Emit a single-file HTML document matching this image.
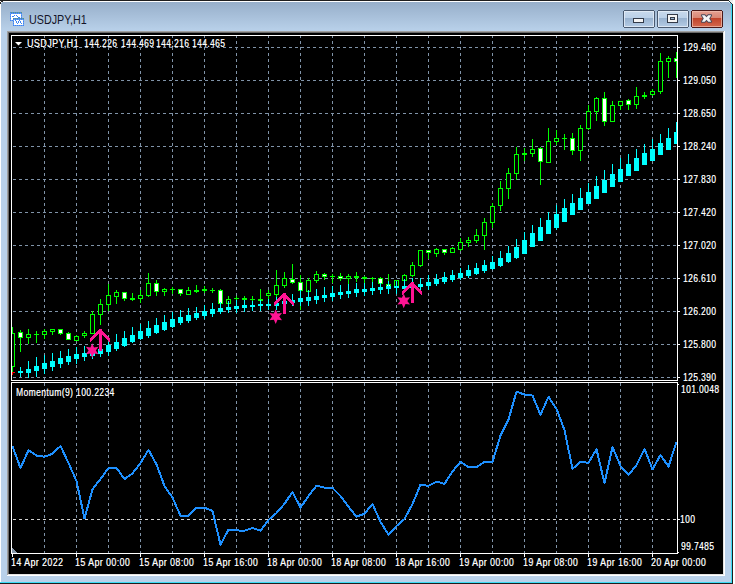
<!DOCTYPE html>
<html><head><meta charset="utf-8"><style>
html,body{margin:0;padding:0;background:#fff;width:735px;height:584px;overflow:hidden}
#win{position:absolute;left:0;top:0;width:735px;height:584px}
.t{position:absolute;font-family:"Liberation Sans",sans-serif;font-size:10px;line-height:10px;color:#fff;white-space:nowrap;transform-origin:0 0;text-shadow:0.4px 0 0 rgba(255,255,255,0.6)}
.tt{position:absolute;font-family:"Liberation Sans",sans-serif;font-size:12px;line-height:14px;color:#141428;white-space:nowrap;transform-origin:0 0;transform:scaleX(0.895)}
</style></head><body>
<div id="win">
<svg width="735" height="584" style="position:absolute;left:0;top:0" shape-rendering="crispEdges">
<defs>
<linearGradient id="tg" x1="0" y1="0" x2="0" y2="1"><stop offset="0" stop-color="#97afca"/><stop offset="1" stop-color="#b9d1ea"/></linearGradient>
<linearGradient id="bu" x1="0" y1="0" x2="0" y2="1"><stop offset="0" stop-color="#c9daec"/><stop offset="0.45" stop-color="#bad0e8"/><stop offset="0.46" stop-color="#98b2cf"/><stop offset="1" stop-color="#b6cde6"/></linearGradient>
<linearGradient id="bc" x1="0" y1="0" x2="0" y2="1"><stop offset="0" stop-color="#e6a294"/><stop offset="0.45" stop-color="#d88572"/><stop offset="0.46" stop-color="#c0432a"/><stop offset="1" stop-color="#d56a50"/></linearGradient>
<clipPath id="mainclip"><rect x="12" y="36" width="665" height="344"/></clipPath><clipPath id="indclip"><rect x="12" y="383" width="665" height="170"/></clipPath>
</defs>
<rect x="0" y="0" width="733" height="584" fill="#b9d1ea"/>
<rect x="0" y="2" width="733" height="29" fill="url(#tg)"/>
<rect x="0" y="0" width="729" height="1" fill="#1e1e1e"/>
<rect x="729" y="0" width="6" height="1" fill="#e8e8e8"/>
<rect x="0" y="1" width="729" height="1" fill="#ffffff"/>
<rect x="1" y="1" width="2" height="1" fill="#2a2a2a"/>
<rect x="0" y="2" width="1" height="2" fill="#2a2a2a"/>
<rect x="1" y="2" width="1" height="1" fill="#f0f4f8"/>
<rect x="0" y="4" width="1" height="580" fill="#ffffff"/>
<rect x="729" y="1" width="1" height="1" fill="#203a40"/>
<rect x="730" y="1" width="3" height="1" fill="#f0f0f0"/>
<rect x="729" y="2" width="1" height="1" fill="#c8eef8"/>
<rect x="730" y="2" width="1" height="1" fill="#203a40"/>
<rect x="731" y="2" width="2" height="2" fill="#f0f0f0"/>
<rect x="731" y="3" width="1" height="1" fill="#204048"/>
<rect x="731" y="4" width="1" height="579" fill="#3cdcf6"/>
<rect x="732" y="4" width="1" height="580" fill="#1e1e1e"/>
<rect x="0" y="582" width="732" height="1" fill="#3cdcf6"/>
<rect x="0" y="583" width="733" height="1" fill="#1e1e1e"/>
<rect x="733" y="0" width="2" height="584" fill="#fff"/>
<!-- client edge -->
<rect x="7" y="31" width="718" height="545" fill="#ffffff"/>
<rect x="7" y="31" width="717" height="544" fill="#a0a0a0"/>
<rect x="8" y="32" width="716" height="543" fill="#e3e3e3"/>
<rect x="8" y="32" width="715" height="542" fill="#696969"/>
<rect x="9" y="33" width="714" height="541" fill="#000"/>
<!-- buttons -->
<rect x="623.5" y="10.5" width="31" height="17" rx="2" fill="url(#bu)" stroke="#4a5a70"/>
<rect x="624.5" y="11.5" width="29" height="15" rx="1" fill="none" stroke="#e6eef8" stroke-opacity="0.8"/>
<rect x="657.5" y="10.5" width="31" height="17" rx="2" fill="url(#bu)" stroke="#4a5a70"/>
<rect x="658.5" y="11.5" width="29" height="15" rx="1" fill="none" stroke="#e6eef8" stroke-opacity="0.8"/>
<rect x="691.5" y="10.5" width="31" height="17" rx="2" fill="url(#bc)" stroke="#4a1818"/>
<rect x="692.5" y="11.5" width="29" height="15" rx="1" fill="none" stroke="#f0c0b0" stroke-opacity="0.7"/>
<rect x="633.5" y="18.5" width="10" height="4" rx="1" fill="#f4f4f4" stroke="#333a48"/>
<rect x="667.5" y="14.5" width="10" height="8" rx="1" fill="#f4f4f4" stroke="#333a48"/>
<rect x="670.5" y="17.5" width="4" height="2" fill="#9ab4d0" stroke="#333a48"/>
<path d="M701.8 15.2 L704.7 15.2 L706.5 17.2 L708.3 15.2 L711.2 15.2 L709.2 18.5 L711.2 21.8 L708.3 21.8 L706.5 19.8 L704.7 21.8 L701.8 21.8 L703.8 18.5 Z" fill="#f6f6f6" stroke="#4a4a5a" stroke-width="1.8" paint-order="stroke" stroke-linejoin="round" shape-rendering="geometricPrecision"/>
<g id="icon"><rect x="10" y="12" width="12" height="9" fill="#ffffff"/><rect x="10" y="12" width="1" height="1" fill="#3d84f4"/><rect x="10" y="13" width="1" height="1" fill="#6aa0f0"/><rect x="10" y="14" width="1" height="1" fill="#3d84f4"/><rect x="10" y="15" width="1" height="1" fill="#6aa0f0"/><rect x="10" y="16" width="1" height="1" fill="#3d84f4"/><rect x="10" y="17" width="1" height="1" fill="#6aa0f0"/><rect x="10" y="18" width="1" height="1" fill="#3d84f4"/><rect x="10" y="19" width="1" height="1" fill="#6aa0f0"/><rect x="10" y="20" width="1" height="1" fill="#3d84f4"/><rect x="11" y="12" width="1" height="1" fill="#5f9a7a"/><rect x="11" y="13" width="1" height="1" fill="#3d84f4"/><rect x="11" y="20" width="1" height="1" fill="#6aa0f0"/><rect x="12" y="12" width="1" height="1" fill="#3d84f4"/><rect x="12" y="13" width="1" height="1" fill="#6aa0f0"/><rect x="12" y="20" width="1" height="1" fill="#3d84f4"/><rect x="13" y="12" width="1" height="1" fill="#5f9a7a"/><rect x="13" y="13" width="1" height="1" fill="#3d84f4"/><rect x="13" y="20" width="1" height="1" fill="#6aa0f0"/><rect x="14" y="12" width="1" height="1" fill="#3d84f4"/><rect x="14" y="13" width="1" height="1" fill="#6aa0f0"/><rect x="14" y="20" width="1" height="1" fill="#3d84f4"/><rect x="15" y="12" width="1" height="1" fill="#5f9a7a"/><rect x="15" y="13" width="1" height="1" fill="#3d84f4"/><rect x="15" y="20" width="1" height="1" fill="#6aa0f0"/><rect x="16" y="12" width="1" height="1" fill="#3d84f4"/><rect x="16" y="13" width="1" height="1" fill="#6aa0f0"/><rect x="16" y="20" width="1" height="1" fill="#3d84f4"/><rect x="17" y="12" width="1" height="1" fill="#5f9a7a"/><rect x="17" y="13" width="1" height="1" fill="#3d84f4"/><rect x="17" y="20" width="1" height="1" fill="#6aa0f0"/><rect x="18" y="12" width="1" height="1" fill="#3d84f4"/><rect x="18" y="13" width="1" height="1" fill="#6aa0f0"/><rect x="18" y="20" width="1" height="1" fill="#3d84f4"/><rect x="19" y="12" width="1" height="1" fill="#5f9a7a"/><rect x="19" y="13" width="1" height="1" fill="#3d84f4"/><rect x="19" y="20" width="1" height="1" fill="#6aa0f0"/><rect x="20" y="12" width="1" height="1" fill="#3d84f4"/><rect x="20" y="13" width="1" height="1" fill="#6aa0f0"/><rect x="20" y="20" width="1" height="1" fill="#3d84f4"/><rect x="21" y="12" width="1" height="1" fill="#5f9a7a"/><rect x="21" y="13" width="1" height="1" fill="#3d84f4"/><rect x="21" y="14" width="1" height="1" fill="#6aa0f0"/><rect x="21" y="15" width="1" height="1" fill="#3d84f4"/><rect x="21" y="16" width="1" height="1" fill="#6aa0f0"/><rect x="21" y="17" width="1" height="1" fill="#3d84f4"/><rect x="21" y="18" width="1" height="1" fill="#6aa0f0"/><rect x="21" y="19" width="1" height="1" fill="#3d84f4"/><rect x="21" y="20" width="1" height="1" fill="#6aa0f0"/><rect x="12" y="16" width="1" height="1" fill="#3d84f4"/><rect x="13" y="16" width="1" height="1" fill="#3d84f4"/><rect x="14" y="15" width="1" height="1" fill="#3d84f4"/><rect x="16" y="15" width="1" height="1" fill="#3d84f4"/><rect x="17" y="16" width="1" height="1" fill="#3d84f4"/><rect x="18" y="17" width="1" height="1" fill="#3d84f4"/><rect x="19" y="17" width="1" height="1" fill="#3d84f4"/><rect x="13" y="18" width="11" height="8" fill="#ffffff"/><rect x="13" y="18" width="1" height="1" fill="#5f9a7a"/><rect x="13" y="19" width="1" height="1" fill="#3d84f4"/><rect x="13" y="20" width="1" height="1" fill="#6aa0f0"/><rect x="13" y="21" width="1" height="1" fill="#3d84f4"/><rect x="13" y="22" width="1" height="1" fill="#6aa0f0"/><rect x="13" y="23" width="1" height="1" fill="#3d84f4"/><rect x="13" y="24" width="1" height="1" fill="#6aa0f0"/><rect x="13" y="25" width="1" height="1" fill="#3d84f4"/><rect x="14" y="18" width="1" height="1" fill="#3d84f4"/><rect x="14" y="19" width="1" height="1" fill="#6aa0f0"/><rect x="14" y="25" width="1" height="1" fill="#6aa0f0"/><rect x="15" y="18" width="1" height="1" fill="#5f9a7a"/><rect x="15" y="19" width="1" height="1" fill="#3d84f4"/><rect x="15" y="25" width="1" height="1" fill="#3d84f4"/><rect x="16" y="18" width="1" height="1" fill="#3d84f4"/><rect x="16" y="19" width="1" height="1" fill="#6aa0f0"/><rect x="16" y="25" width="1" height="1" fill="#6aa0f0"/><rect x="17" y="18" width="1" height="1" fill="#5f9a7a"/><rect x="17" y="19" width="1" height="1" fill="#3d84f4"/><rect x="17" y="25" width="1" height="1" fill="#3d84f4"/><rect x="18" y="18" width="1" height="1" fill="#3d84f4"/><rect x="18" y="19" width="1" height="1" fill="#6aa0f0"/><rect x="18" y="25" width="1" height="1" fill="#6aa0f0"/><rect x="19" y="18" width="1" height="1" fill="#5f9a7a"/><rect x="19" y="19" width="1" height="1" fill="#3d84f4"/><rect x="19" y="25" width="1" height="1" fill="#3d84f4"/><rect x="20" y="18" width="1" height="1" fill="#3d84f4"/><rect x="20" y="19" width="1" height="1" fill="#6aa0f0"/><rect x="20" y="25" width="1" height="1" fill="#6aa0f0"/><rect x="21" y="18" width="1" height="1" fill="#5f9a7a"/><rect x="21" y="19" width="1" height="1" fill="#3d84f4"/><rect x="21" y="25" width="1" height="1" fill="#3d84f4"/><rect x="22" y="18" width="1" height="1" fill="#3d84f4"/><rect x="22" y="19" width="1" height="1" fill="#6aa0f0"/><rect x="22" y="25" width="1" height="1" fill="#6aa0f0"/><rect x="23" y="18" width="1" height="1" fill="#5f9a7a"/><rect x="23" y="19" width="1" height="1" fill="#3d84f4"/><rect x="23" y="20" width="1" height="1" fill="#6aa0f0"/><rect x="23" y="21" width="1" height="1" fill="#3d84f4"/><rect x="23" y="22" width="1" height="1" fill="#6aa0f0"/><rect x="23" y="23" width="1" height="1" fill="#3d84f4"/><rect x="23" y="24" width="1" height="1" fill="#6aa0f0"/><rect x="23" y="25" width="1" height="1" fill="#3d84f4"/><rect x="15" y="20" width="1" height="1" fill="#3d84f4"/><rect x="16" y="21" width="1" height="1" fill="#3d84f4"/><rect x="16" y="22" width="1" height="1" fill="#3d84f4"/><rect x="17" y="23" width="1" height="1" fill="#3d84f4"/><rect x="18" y="22" width="1" height="1" fill="#3d84f4"/><rect x="18" y="21" width="1" height="1" fill="#3d84f4"/><rect x="19" y="20" width="1" height="1" fill="#3d84f4"/><rect x="20" y="21" width="1" height="1" fill="#3d84f4"/><rect x="20" y="22" width="1" height="1" fill="#3d84f4"/><rect x="21" y="23" width="1" height="1" fill="#3d84f4"/></g>
<path d="M13 47.5h3 M19 47.5h3 M25 47.5h3 M31 47.5h3 M37 47.5h3 M43 47.5h3 M49 47.5h3 M55 47.5h3 M61 47.5h3 M67 47.5h3 M73 47.5h3 M79 47.5h3 M85 47.5h3 M91 47.5h3 M97 47.5h3 M103 47.5h3 M109 47.5h3 M115 47.5h3 M121 47.5h3 M127 47.5h3 M133 47.5h3 M139 47.5h3 M145 47.5h3 M151 47.5h3 M157 47.5h3 M163 47.5h3 M169 47.5h3 M175 47.5h3 M181 47.5h3 M187 47.5h3 M193 47.5h3 M199 47.5h3 M205 47.5h3 M211 47.5h3 M217 47.5h3 M223 47.5h3 M229 47.5h3 M235 47.5h3 M241 47.5h3 M247 47.5h3 M253 47.5h3 M259 47.5h3 M265 47.5h3 M271 47.5h3 M277 47.5h3 M283 47.5h3 M289 47.5h3 M295 47.5h3 M301 47.5h3 M307 47.5h3 M313 47.5h3 M319 47.5h3 M325 47.5h3 M331 47.5h3 M337 47.5h3 M343 47.5h3 M349 47.5h3 M355 47.5h3 M361 47.5h3 M367 47.5h3 M373 47.5h3 M379 47.5h3 M385 47.5h3 M391 47.5h3 M397 47.5h3 M403 47.5h3 M409 47.5h3 M415 47.5h3 M421 47.5h3 M427 47.5h3 M433 47.5h3 M439 47.5h3 M445 47.5h3 M451 47.5h3 M457 47.5h3 M463 47.5h3 M469 47.5h3 M475 47.5h3 M481 47.5h3 M487 47.5h3 M493 47.5h3 M499 47.5h3 M505 47.5h3 M511 47.5h3 M517 47.5h3 M523 47.5h3 M529 47.5h3 M535 47.5h3 M541 47.5h3 M547 47.5h3 M553 47.5h3 M559 47.5h3 M565 47.5h3 M571 47.5h3 M577 47.5h3 M583 47.5h3 M589 47.5h3 M595 47.5h3 M601 47.5h3 M607 47.5h3 M613 47.5h3 M619 47.5h3 M625 47.5h3 M631 47.5h3 M637 47.5h3 M643 47.5h3 M649 47.5h3 M655 47.5h3 M661 47.5h3 M667 47.5h3 M673 47.5h3 M13 80.5h3 M19 80.5h3 M25 80.5h3 M31 80.5h3 M37 80.5h3 M43 80.5h3 M49 80.5h3 M55 80.5h3 M61 80.5h3 M67 80.5h3 M73 80.5h3 M79 80.5h3 M85 80.5h3 M91 80.5h3 M97 80.5h3 M103 80.5h3 M109 80.5h3 M115 80.5h3 M121 80.5h3 M127 80.5h3 M133 80.5h3 M139 80.5h3 M145 80.5h3 M151 80.5h3 M157 80.5h3 M163 80.5h3 M169 80.5h3 M175 80.5h3 M181 80.5h3 M187 80.5h3 M193 80.5h3 M199 80.5h3 M205 80.5h3 M211 80.5h3 M217 80.5h3 M223 80.5h3 M229 80.5h3 M235 80.5h3 M241 80.5h3 M247 80.5h3 M253 80.5h3 M259 80.5h3 M265 80.5h3 M271 80.5h3 M277 80.5h3 M283 80.5h3 M289 80.5h3 M295 80.5h3 M301 80.5h3 M307 80.5h3 M313 80.5h3 M319 80.5h3 M325 80.5h3 M331 80.5h3 M337 80.5h3 M343 80.5h3 M349 80.5h3 M355 80.5h3 M361 80.5h3 M367 80.5h3 M373 80.5h3 M379 80.5h3 M385 80.5h3 M391 80.5h3 M397 80.5h3 M403 80.5h3 M409 80.5h3 M415 80.5h3 M421 80.5h3 M427 80.5h3 M433 80.5h3 M439 80.5h3 M445 80.5h3 M451 80.5h3 M457 80.5h3 M463 80.5h3 M469 80.5h3 M475 80.5h3 M481 80.5h3 M487 80.5h3 M493 80.5h3 M499 80.5h3 M505 80.5h3 M511 80.5h3 M517 80.5h3 M523 80.5h3 M529 80.5h3 M535 80.5h3 M541 80.5h3 M547 80.5h3 M553 80.5h3 M559 80.5h3 M565 80.5h3 M571 80.5h3 M577 80.5h3 M583 80.5h3 M589 80.5h3 M595 80.5h3 M601 80.5h3 M607 80.5h3 M613 80.5h3 M619 80.5h3 M625 80.5h3 M631 80.5h3 M637 80.5h3 M643 80.5h3 M649 80.5h3 M655 80.5h3 M661 80.5h3 M667 80.5h3 M673 80.5h3 M13 113.5h3 M19 113.5h3 M25 113.5h3 M31 113.5h3 M37 113.5h3 M43 113.5h3 M49 113.5h3 M55 113.5h3 M61 113.5h3 M67 113.5h3 M73 113.5h3 M79 113.5h3 M85 113.5h3 M91 113.5h3 M97 113.5h3 M103 113.5h3 M109 113.5h3 M115 113.5h3 M121 113.5h3 M127 113.5h3 M133 113.5h3 M139 113.5h3 M145 113.5h3 M151 113.5h3 M157 113.5h3 M163 113.5h3 M169 113.5h3 M175 113.5h3 M181 113.5h3 M187 113.5h3 M193 113.5h3 M199 113.5h3 M205 113.5h3 M211 113.5h3 M217 113.5h3 M223 113.5h3 M229 113.5h3 M235 113.5h3 M241 113.5h3 M247 113.5h3 M253 113.5h3 M259 113.5h3 M265 113.5h3 M271 113.5h3 M277 113.5h3 M283 113.5h3 M289 113.5h3 M295 113.5h3 M301 113.5h3 M307 113.5h3 M313 113.5h3 M319 113.5h3 M325 113.5h3 M331 113.5h3 M337 113.5h3 M343 113.5h3 M349 113.5h3 M355 113.5h3 M361 113.5h3 M367 113.5h3 M373 113.5h3 M379 113.5h3 M385 113.5h3 M391 113.5h3 M397 113.5h3 M403 113.5h3 M409 113.5h3 M415 113.5h3 M421 113.5h3 M427 113.5h3 M433 113.5h3 M439 113.5h3 M445 113.5h3 M451 113.5h3 M457 113.5h3 M463 113.5h3 M469 113.5h3 M475 113.5h3 M481 113.5h3 M487 113.5h3 M493 113.5h3 M499 113.5h3 M505 113.5h3 M511 113.5h3 M517 113.5h3 M523 113.5h3 M529 113.5h3 M535 113.5h3 M541 113.5h3 M547 113.5h3 M553 113.5h3 M559 113.5h3 M565 113.5h3 M571 113.5h3 M577 113.5h3 M583 113.5h3 M589 113.5h3 M595 113.5h3 M601 113.5h3 M607 113.5h3 M613 113.5h3 M619 113.5h3 M625 113.5h3 M631 113.5h3 M637 113.5h3 M643 113.5h3 M649 113.5h3 M655 113.5h3 M661 113.5h3 M667 113.5h3 M673 113.5h3 M13 146.5h3 M19 146.5h3 M25 146.5h3 M31 146.5h3 M37 146.5h3 M43 146.5h3 M49 146.5h3 M55 146.5h3 M61 146.5h3 M67 146.5h3 M73 146.5h3 M79 146.5h3 M85 146.5h3 M91 146.5h3 M97 146.5h3 M103 146.5h3 M109 146.5h3 M115 146.5h3 M121 146.5h3 M127 146.5h3 M133 146.5h3 M139 146.5h3 M145 146.5h3 M151 146.5h3 M157 146.5h3 M163 146.5h3 M169 146.5h3 M175 146.5h3 M181 146.5h3 M187 146.5h3 M193 146.5h3 M199 146.5h3 M205 146.5h3 M211 146.5h3 M217 146.5h3 M223 146.5h3 M229 146.5h3 M235 146.5h3 M241 146.5h3 M247 146.5h3 M253 146.5h3 M259 146.5h3 M265 146.5h3 M271 146.5h3 M277 146.5h3 M283 146.5h3 M289 146.5h3 M295 146.5h3 M301 146.5h3 M307 146.5h3 M313 146.5h3 M319 146.5h3 M325 146.5h3 M331 146.5h3 M337 146.5h3 M343 146.5h3 M349 146.5h3 M355 146.5h3 M361 146.5h3 M367 146.5h3 M373 146.5h3 M379 146.5h3 M385 146.5h3 M391 146.5h3 M397 146.5h3 M403 146.5h3 M409 146.5h3 M415 146.5h3 M421 146.5h3 M427 146.5h3 M433 146.5h3 M439 146.5h3 M445 146.5h3 M451 146.5h3 M457 146.5h3 M463 146.5h3 M469 146.5h3 M475 146.5h3 M481 146.5h3 M487 146.5h3 M493 146.5h3 M499 146.5h3 M505 146.5h3 M511 146.5h3 M517 146.5h3 M523 146.5h3 M529 146.5h3 M535 146.5h3 M541 146.5h3 M547 146.5h3 M553 146.5h3 M559 146.5h3 M565 146.5h3 M571 146.5h3 M577 146.5h3 M583 146.5h3 M589 146.5h3 M595 146.5h3 M601 146.5h3 M607 146.5h3 M613 146.5h3 M619 146.5h3 M625 146.5h3 M631 146.5h3 M637 146.5h3 M643 146.5h3 M649 146.5h3 M655 146.5h3 M661 146.5h3 M667 146.5h3 M673 146.5h3 M13 179.5h3 M19 179.5h3 M25 179.5h3 M31 179.5h3 M37 179.5h3 M43 179.5h3 M49 179.5h3 M55 179.5h3 M61 179.5h3 M67 179.5h3 M73 179.5h3 M79 179.5h3 M85 179.5h3 M91 179.5h3 M97 179.5h3 M103 179.5h3 M109 179.5h3 M115 179.5h3 M121 179.5h3 M127 179.5h3 M133 179.5h3 M139 179.5h3 M145 179.5h3 M151 179.5h3 M157 179.5h3 M163 179.5h3 M169 179.5h3 M175 179.5h3 M181 179.5h3 M187 179.5h3 M193 179.5h3 M199 179.5h3 M205 179.5h3 M211 179.5h3 M217 179.5h3 M223 179.5h3 M229 179.5h3 M235 179.5h3 M241 179.5h3 M247 179.5h3 M253 179.5h3 M259 179.5h3 M265 179.5h3 M271 179.5h3 M277 179.5h3 M283 179.5h3 M289 179.5h3 M295 179.5h3 M301 179.5h3 M307 179.5h3 M313 179.5h3 M319 179.5h3 M325 179.5h3 M331 179.5h3 M337 179.5h3 M343 179.5h3 M349 179.5h3 M355 179.5h3 M361 179.5h3 M367 179.5h3 M373 179.5h3 M379 179.5h3 M385 179.5h3 M391 179.5h3 M397 179.5h3 M403 179.5h3 M409 179.5h3 M415 179.5h3 M421 179.5h3 M427 179.5h3 M433 179.5h3 M439 179.5h3 M445 179.5h3 M451 179.5h3 M457 179.5h3 M463 179.5h3 M469 179.5h3 M475 179.5h3 M481 179.5h3 M487 179.5h3 M493 179.5h3 M499 179.5h3 M505 179.5h3 M511 179.5h3 M517 179.5h3 M523 179.5h3 M529 179.5h3 M535 179.5h3 M541 179.5h3 M547 179.5h3 M553 179.5h3 M559 179.5h3 M565 179.5h3 M571 179.5h3 M577 179.5h3 M583 179.5h3 M589 179.5h3 M595 179.5h3 M601 179.5h3 M607 179.5h3 M613 179.5h3 M619 179.5h3 M625 179.5h3 M631 179.5h3 M637 179.5h3 M643 179.5h3 M649 179.5h3 M655 179.5h3 M661 179.5h3 M667 179.5h3 M673 179.5h3 M13 212.5h3 M19 212.5h3 M25 212.5h3 M31 212.5h3 M37 212.5h3 M43 212.5h3 M49 212.5h3 M55 212.5h3 M61 212.5h3 M67 212.5h3 M73 212.5h3 M79 212.5h3 M85 212.5h3 M91 212.5h3 M97 212.5h3 M103 212.5h3 M109 212.5h3 M115 212.5h3 M121 212.5h3 M127 212.5h3 M133 212.5h3 M139 212.5h3 M145 212.5h3 M151 212.5h3 M157 212.5h3 M163 212.5h3 M169 212.5h3 M175 212.5h3 M181 212.5h3 M187 212.5h3 M193 212.5h3 M199 212.5h3 M205 212.5h3 M211 212.5h3 M217 212.5h3 M223 212.5h3 M229 212.5h3 M235 212.5h3 M241 212.5h3 M247 212.5h3 M253 212.5h3 M259 212.5h3 M265 212.5h3 M271 212.5h3 M277 212.5h3 M283 212.5h3 M289 212.5h3 M295 212.5h3 M301 212.5h3 M307 212.5h3 M313 212.5h3 M319 212.5h3 M325 212.5h3 M331 212.5h3 M337 212.5h3 M343 212.5h3 M349 212.5h3 M355 212.5h3 M361 212.5h3 M367 212.5h3 M373 212.5h3 M379 212.5h3 M385 212.5h3 M391 212.5h3 M397 212.5h3 M403 212.5h3 M409 212.5h3 M415 212.5h3 M421 212.5h3 M427 212.5h3 M433 212.5h3 M439 212.5h3 M445 212.5h3 M451 212.5h3 M457 212.5h3 M463 212.5h3 M469 212.5h3 M475 212.5h3 M481 212.5h3 M487 212.5h3 M493 212.5h3 M499 212.5h3 M505 212.5h3 M511 212.5h3 M517 212.5h3 M523 212.5h3 M529 212.5h3 M535 212.5h3 M541 212.5h3 M547 212.5h3 M553 212.5h3 M559 212.5h3 M565 212.5h3 M571 212.5h3 M577 212.5h3 M583 212.5h3 M589 212.5h3 M595 212.5h3 M601 212.5h3 M607 212.5h3 M613 212.5h3 M619 212.5h3 M625 212.5h3 M631 212.5h3 M637 212.5h3 M643 212.5h3 M649 212.5h3 M655 212.5h3 M661 212.5h3 M667 212.5h3 M673 212.5h3 M13 245.5h3 M19 245.5h3 M25 245.5h3 M31 245.5h3 M37 245.5h3 M43 245.5h3 M49 245.5h3 M55 245.5h3 M61 245.5h3 M67 245.5h3 M73 245.5h3 M79 245.5h3 M85 245.5h3 M91 245.5h3 M97 245.5h3 M103 245.5h3 M109 245.5h3 M115 245.5h3 M121 245.5h3 M127 245.5h3 M133 245.5h3 M139 245.5h3 M145 245.5h3 M151 245.5h3 M157 245.5h3 M163 245.5h3 M169 245.5h3 M175 245.5h3 M181 245.5h3 M187 245.5h3 M193 245.5h3 M199 245.5h3 M205 245.5h3 M211 245.5h3 M217 245.5h3 M223 245.5h3 M229 245.5h3 M235 245.5h3 M241 245.5h3 M247 245.5h3 M253 245.5h3 M259 245.5h3 M265 245.5h3 M271 245.5h3 M277 245.5h3 M283 245.5h3 M289 245.5h3 M295 245.5h3 M301 245.5h3 M307 245.5h3 M313 245.5h3 M319 245.5h3 M325 245.5h3 M331 245.5h3 M337 245.5h3 M343 245.5h3 M349 245.5h3 M355 245.5h3 M361 245.5h3 M367 245.5h3 M373 245.5h3 M379 245.5h3 M385 245.5h3 M391 245.5h3 M397 245.5h3 M403 245.5h3 M409 245.5h3 M415 245.5h3 M421 245.5h3 M427 245.5h3 M433 245.5h3 M439 245.5h3 M445 245.5h3 M451 245.5h3 M457 245.5h3 M463 245.5h3 M469 245.5h3 M475 245.5h3 M481 245.5h3 M487 245.5h3 M493 245.5h3 M499 245.5h3 M505 245.5h3 M511 245.5h3 M517 245.5h3 M523 245.5h3 M529 245.5h3 M535 245.5h3 M541 245.5h3 M547 245.5h3 M553 245.5h3 M559 245.5h3 M565 245.5h3 M571 245.5h3 M577 245.5h3 M583 245.5h3 M589 245.5h3 M595 245.5h3 M601 245.5h3 M607 245.5h3 M613 245.5h3 M619 245.5h3 M625 245.5h3 M631 245.5h3 M637 245.5h3 M643 245.5h3 M649 245.5h3 M655 245.5h3 M661 245.5h3 M667 245.5h3 M673 245.5h3 M13 278.5h3 M19 278.5h3 M25 278.5h3 M31 278.5h3 M37 278.5h3 M43 278.5h3 M49 278.5h3 M55 278.5h3 M61 278.5h3 M67 278.5h3 M73 278.5h3 M79 278.5h3 M85 278.5h3 M91 278.5h3 M97 278.5h3 M103 278.5h3 M109 278.5h3 M115 278.5h3 M121 278.5h3 M127 278.5h3 M133 278.5h3 M139 278.5h3 M145 278.5h3 M151 278.5h3 M157 278.5h3 M163 278.5h3 M169 278.5h3 M175 278.5h3 M181 278.5h3 M187 278.5h3 M193 278.5h3 M199 278.5h3 M205 278.5h3 M211 278.5h3 M217 278.5h3 M223 278.5h3 M229 278.5h3 M235 278.5h3 M241 278.5h3 M247 278.5h3 M253 278.5h3 M259 278.5h3 M265 278.5h3 M271 278.5h3 M277 278.5h3 M283 278.5h3 M289 278.5h3 M295 278.5h3 M301 278.5h3 M307 278.5h3 M313 278.5h3 M319 278.5h3 M325 278.5h3 M331 278.5h3 M337 278.5h3 M343 278.5h3 M349 278.5h3 M355 278.5h3 M361 278.5h3 M367 278.5h3 M373 278.5h3 M379 278.5h3 M385 278.5h3 M391 278.5h3 M397 278.5h3 M403 278.5h3 M409 278.5h3 M415 278.5h3 M421 278.5h3 M427 278.5h3 M433 278.5h3 M439 278.5h3 M445 278.5h3 M451 278.5h3 M457 278.5h3 M463 278.5h3 M469 278.5h3 M475 278.5h3 M481 278.5h3 M487 278.5h3 M493 278.5h3 M499 278.5h3 M505 278.5h3 M511 278.5h3 M517 278.5h3 M523 278.5h3 M529 278.5h3 M535 278.5h3 M541 278.5h3 M547 278.5h3 M553 278.5h3 M559 278.5h3 M565 278.5h3 M571 278.5h3 M577 278.5h3 M583 278.5h3 M589 278.5h3 M595 278.5h3 M601 278.5h3 M607 278.5h3 M613 278.5h3 M619 278.5h3 M625 278.5h3 M631 278.5h3 M637 278.5h3 M643 278.5h3 M649 278.5h3 M655 278.5h3 M661 278.5h3 M667 278.5h3 M673 278.5h3 M13 311.5h3 M19 311.5h3 M25 311.5h3 M31 311.5h3 M37 311.5h3 M43 311.5h3 M49 311.5h3 M55 311.5h3 M61 311.5h3 M67 311.5h3 M73 311.5h3 M79 311.5h3 M85 311.5h3 M91 311.5h3 M97 311.5h3 M103 311.5h3 M109 311.5h3 M115 311.5h3 M121 311.5h3 M127 311.5h3 M133 311.5h3 M139 311.5h3 M145 311.5h3 M151 311.5h3 M157 311.5h3 M163 311.5h3 M169 311.5h3 M175 311.5h3 M181 311.5h3 M187 311.5h3 M193 311.5h3 M199 311.5h3 M205 311.5h3 M211 311.5h3 M217 311.5h3 M223 311.5h3 M229 311.5h3 M235 311.5h3 M241 311.5h3 M247 311.5h3 M253 311.5h3 M259 311.5h3 M265 311.5h3 M271 311.5h3 M277 311.5h3 M283 311.5h3 M289 311.5h3 M295 311.5h3 M301 311.5h3 M307 311.5h3 M313 311.5h3 M319 311.5h3 M325 311.5h3 M331 311.5h3 M337 311.5h3 M343 311.5h3 M349 311.5h3 M355 311.5h3 M361 311.5h3 M367 311.5h3 M373 311.5h3 M379 311.5h3 M385 311.5h3 M391 311.5h3 M397 311.5h3 M403 311.5h3 M409 311.5h3 M415 311.5h3 M421 311.5h3 M427 311.5h3 M433 311.5h3 M439 311.5h3 M445 311.5h3 M451 311.5h3 M457 311.5h3 M463 311.5h3 M469 311.5h3 M475 311.5h3 M481 311.5h3 M487 311.5h3 M493 311.5h3 M499 311.5h3 M505 311.5h3 M511 311.5h3 M517 311.5h3 M523 311.5h3 M529 311.5h3 M535 311.5h3 M541 311.5h3 M547 311.5h3 M553 311.5h3 M559 311.5h3 M565 311.5h3 M571 311.5h3 M577 311.5h3 M583 311.5h3 M589 311.5h3 M595 311.5h3 M601 311.5h3 M607 311.5h3 M613 311.5h3 M619 311.5h3 M625 311.5h3 M631 311.5h3 M637 311.5h3 M643 311.5h3 M649 311.5h3 M655 311.5h3 M661 311.5h3 M667 311.5h3 M673 311.5h3 M13 344.5h3 M19 344.5h3 M25 344.5h3 M31 344.5h3 M37 344.5h3 M43 344.5h3 M49 344.5h3 M55 344.5h3 M61 344.5h3 M67 344.5h3 M73 344.5h3 M79 344.5h3 M85 344.5h3 M91 344.5h3 M97 344.5h3 M103 344.5h3 M109 344.5h3 M115 344.5h3 M121 344.5h3 M127 344.5h3 M133 344.5h3 M139 344.5h3 M145 344.5h3 M151 344.5h3 M157 344.5h3 M163 344.5h3 M169 344.5h3 M175 344.5h3 M181 344.5h3 M187 344.5h3 M193 344.5h3 M199 344.5h3 M205 344.5h3 M211 344.5h3 M217 344.5h3 M223 344.5h3 M229 344.5h3 M235 344.5h3 M241 344.5h3 M247 344.5h3 M253 344.5h3 M259 344.5h3 M265 344.5h3 M271 344.5h3 M277 344.5h3 M283 344.5h3 M289 344.5h3 M295 344.5h3 M301 344.5h3 M307 344.5h3 M313 344.5h3 M319 344.5h3 M325 344.5h3 M331 344.5h3 M337 344.5h3 M343 344.5h3 M349 344.5h3 M355 344.5h3 M361 344.5h3 M367 344.5h3 M373 344.5h3 M379 344.5h3 M385 344.5h3 M391 344.5h3 M397 344.5h3 M403 344.5h3 M409 344.5h3 M415 344.5h3 M421 344.5h3 M427 344.5h3 M433 344.5h3 M439 344.5h3 M445 344.5h3 M451 344.5h3 M457 344.5h3 M463 344.5h3 M469 344.5h3 M475 344.5h3 M481 344.5h3 M487 344.5h3 M493 344.5h3 M499 344.5h3 M505 344.5h3 M511 344.5h3 M517 344.5h3 M523 344.5h3 M529 344.5h3 M535 344.5h3 M541 344.5h3 M547 344.5h3 M553 344.5h3 M559 344.5h3 M565 344.5h3 M571 344.5h3 M577 344.5h3 M583 344.5h3 M589 344.5h3 M595 344.5h3 M601 344.5h3 M607 344.5h3 M613 344.5h3 M619 344.5h3 M625 344.5h3 M631 344.5h3 M637 344.5h3 M643 344.5h3 M649 344.5h3 M655 344.5h3 M661 344.5h3 M667 344.5h3 M673 344.5h3 M13 377.5h3 M19 377.5h3 M25 377.5h3 M31 377.5h3 M37 377.5h3 M43 377.5h3 M49 377.5h3 M55 377.5h3 M61 377.5h3 M67 377.5h3 M73 377.5h3 M79 377.5h3 M85 377.5h3 M91 377.5h3 M97 377.5h3 M103 377.5h3 M109 377.5h3 M115 377.5h3 M121 377.5h3 M127 377.5h3 M133 377.5h3 M139 377.5h3 M145 377.5h3 M151 377.5h3 M157 377.5h3 M163 377.5h3 M169 377.5h3 M175 377.5h3 M181 377.5h3 M187 377.5h3 M193 377.5h3 M199 377.5h3 M205 377.5h3 M211 377.5h3 M217 377.5h3 M223 377.5h3 M229 377.5h3 M235 377.5h3 M241 377.5h3 M247 377.5h3 M253 377.5h3 M259 377.5h3 M265 377.5h3 M271 377.5h3 M277 377.5h3 M283 377.5h3 M289 377.5h3 M295 377.5h3 M301 377.5h3 M307 377.5h3 M313 377.5h3 M319 377.5h3 M325 377.5h3 M331 377.5h3 M337 377.5h3 M343 377.5h3 M349 377.5h3 M355 377.5h3 M361 377.5h3 M367 377.5h3 M373 377.5h3 M379 377.5h3 M385 377.5h3 M391 377.5h3 M397 377.5h3 M403 377.5h3 M409 377.5h3 M415 377.5h3 M421 377.5h3 M427 377.5h3 M433 377.5h3 M439 377.5h3 M445 377.5h3 M451 377.5h3 M457 377.5h3 M463 377.5h3 M469 377.5h3 M475 377.5h3 M481 377.5h3 M487 377.5h3 M493 377.5h3 M499 377.5h3 M505 377.5h3 M511 377.5h3 M517 377.5h3 M523 377.5h3 M529 377.5h3 M535 377.5h3 M541 377.5h3 M547 377.5h3 M553 377.5h3 M559 377.5h3 M565 377.5h3 M571 377.5h3 M577 377.5h3 M583 377.5h3 M589 377.5h3 M595 377.5h3 M601 377.5h3 M607 377.5h3 M613 377.5h3 M619 377.5h3 M625 377.5h3 M631 377.5h3 M637 377.5h3 M643 377.5h3 M649 377.5h3 M655 377.5h3 M661 377.5h3 M667 377.5h3 M673 377.5h3 M44.5 36v2 M44.5 41v3 M44.5 47v3 M44.5 53v3 M44.5 59v3 M44.5 65v3 M44.5 71v3 M44.5 77v3 M44.5 83v3 M44.5 89v3 M44.5 95v3 M44.5 101v3 M44.5 107v3 M44.5 113v3 M44.5 119v3 M44.5 125v3 M44.5 131v3 M44.5 137v3 M44.5 143v3 M44.5 149v3 M44.5 155v3 M44.5 161v3 M44.5 167v3 M44.5 173v3 M44.5 179v3 M44.5 185v3 M44.5 191v3 M44.5 197v3 M44.5 203v3 M44.5 209v3 M44.5 215v3 M44.5 221v3 M44.5 227v3 M44.5 233v3 M44.5 239v3 M44.5 245v3 M44.5 251v3 M44.5 257v3 M44.5 263v3 M44.5 269v3 M44.5 275v3 M44.5 281v3 M44.5 287v3 M44.5 293v3 M44.5 299v3 M44.5 305v3 M44.5 311v3 M44.5 317v3 M44.5 323v3 M44.5 329v3 M44.5 335v3 M44.5 341v3 M44.5 347v3 M44.5 353v3 M44.5 359v3 M44.5 365v3 M44.5 371v3 M44.5 377v3 M44.5 383v3 M44.5 389v3 M44.5 395v3 M44.5 401v3 M44.5 407v3 M44.5 413v3 M44.5 419v3 M44.5 425v3 M44.5 431v3 M44.5 437v3 M44.5 443v3 M44.5 449v3 M44.5 455v3 M44.5 461v3 M44.5 467v3 M44.5 473v3 M44.5 479v3 M44.5 485v3 M44.5 491v3 M44.5 497v3 M44.5 503v3 M44.5 509v3 M44.5 515v3 M44.5 521v3 M44.5 527v3 M44.5 533v3 M44.5 539v3 M44.5 545v3 M44.5 551v2 M76.5 36v2 M76.5 41v3 M76.5 47v3 M76.5 53v3 M76.5 59v3 M76.5 65v3 M76.5 71v3 M76.5 77v3 M76.5 83v3 M76.5 89v3 M76.5 95v3 M76.5 101v3 M76.5 107v3 M76.5 113v3 M76.5 119v3 M76.5 125v3 M76.5 131v3 M76.5 137v3 M76.5 143v3 M76.5 149v3 M76.5 155v3 M76.5 161v3 M76.5 167v3 M76.5 173v3 M76.5 179v3 M76.5 185v3 M76.5 191v3 M76.5 197v3 M76.5 203v3 M76.5 209v3 M76.5 215v3 M76.5 221v3 M76.5 227v3 M76.5 233v3 M76.5 239v3 M76.5 245v3 M76.5 251v3 M76.5 257v3 M76.5 263v3 M76.5 269v3 M76.5 275v3 M76.5 281v3 M76.5 287v3 M76.5 293v3 M76.5 299v3 M76.5 305v3 M76.5 311v3 M76.5 317v3 M76.5 323v3 M76.5 329v3 M76.5 335v3 M76.5 341v3 M76.5 347v3 M76.5 353v3 M76.5 359v3 M76.5 365v3 M76.5 371v3 M76.5 377v3 M76.5 383v3 M76.5 389v3 M76.5 395v3 M76.5 401v3 M76.5 407v3 M76.5 413v3 M76.5 419v3 M76.5 425v3 M76.5 431v3 M76.5 437v3 M76.5 443v3 M76.5 449v3 M76.5 455v3 M76.5 461v3 M76.5 467v3 M76.5 473v3 M76.5 479v3 M76.5 485v3 M76.5 491v3 M76.5 497v3 M76.5 503v3 M76.5 509v3 M76.5 515v3 M76.5 521v3 M76.5 527v3 M76.5 533v3 M76.5 539v3 M76.5 545v3 M76.5 551v2 M108.5 36v2 M108.5 41v3 M108.5 47v3 M108.5 53v3 M108.5 59v3 M108.5 65v3 M108.5 71v3 M108.5 77v3 M108.5 83v3 M108.5 89v3 M108.5 95v3 M108.5 101v3 M108.5 107v3 M108.5 113v3 M108.5 119v3 M108.5 125v3 M108.5 131v3 M108.5 137v3 M108.5 143v3 M108.5 149v3 M108.5 155v3 M108.5 161v3 M108.5 167v3 M108.5 173v3 M108.5 179v3 M108.5 185v3 M108.5 191v3 M108.5 197v3 M108.5 203v3 M108.5 209v3 M108.5 215v3 M108.5 221v3 M108.5 227v3 M108.5 233v3 M108.5 239v3 M108.5 245v3 M108.5 251v3 M108.5 257v3 M108.5 263v3 M108.5 269v3 M108.5 275v3 M108.5 281v3 M108.5 287v3 M108.5 293v3 M108.5 299v3 M108.5 305v3 M108.5 311v3 M108.5 317v3 M108.5 323v3 M108.5 329v3 M108.5 335v3 M108.5 341v3 M108.5 347v3 M108.5 353v3 M108.5 359v3 M108.5 365v3 M108.5 371v3 M108.5 377v3 M108.5 383v3 M108.5 389v3 M108.5 395v3 M108.5 401v3 M108.5 407v3 M108.5 413v3 M108.5 419v3 M108.5 425v3 M108.5 431v3 M108.5 437v3 M108.5 443v3 M108.5 449v3 M108.5 455v3 M108.5 461v3 M108.5 467v3 M108.5 473v3 M108.5 479v3 M108.5 485v3 M108.5 491v3 M108.5 497v3 M108.5 503v3 M108.5 509v3 M108.5 515v3 M108.5 521v3 M108.5 527v3 M108.5 533v3 M108.5 539v3 M108.5 545v3 M108.5 551v2 M140.5 36v2 M140.5 41v3 M140.5 47v3 M140.5 53v3 M140.5 59v3 M140.5 65v3 M140.5 71v3 M140.5 77v3 M140.5 83v3 M140.5 89v3 M140.5 95v3 M140.5 101v3 M140.5 107v3 M140.5 113v3 M140.5 119v3 M140.5 125v3 M140.5 131v3 M140.5 137v3 M140.5 143v3 M140.5 149v3 M140.5 155v3 M140.5 161v3 M140.5 167v3 M140.5 173v3 M140.5 179v3 M140.5 185v3 M140.5 191v3 M140.5 197v3 M140.5 203v3 M140.5 209v3 M140.5 215v3 M140.5 221v3 M140.5 227v3 M140.5 233v3 M140.5 239v3 M140.5 245v3 M140.5 251v3 M140.5 257v3 M140.5 263v3 M140.5 269v3 M140.5 275v3 M140.5 281v3 M140.5 287v3 M140.5 293v3 M140.5 299v3 M140.5 305v3 M140.5 311v3 M140.5 317v3 M140.5 323v3 M140.5 329v3 M140.5 335v3 M140.5 341v3 M140.5 347v3 M140.5 353v3 M140.5 359v3 M140.5 365v3 M140.5 371v3 M140.5 377v3 M140.5 383v3 M140.5 389v3 M140.5 395v3 M140.5 401v3 M140.5 407v3 M140.5 413v3 M140.5 419v3 M140.5 425v3 M140.5 431v3 M140.5 437v3 M140.5 443v3 M140.5 449v3 M140.5 455v3 M140.5 461v3 M140.5 467v3 M140.5 473v3 M140.5 479v3 M140.5 485v3 M140.5 491v3 M140.5 497v3 M140.5 503v3 M140.5 509v3 M140.5 515v3 M140.5 521v3 M140.5 527v3 M140.5 533v3 M140.5 539v3 M140.5 545v3 M140.5 551v2 M172.5 36v2 M172.5 41v3 M172.5 47v3 M172.5 53v3 M172.5 59v3 M172.5 65v3 M172.5 71v3 M172.5 77v3 M172.5 83v3 M172.5 89v3 M172.5 95v3 M172.5 101v3 M172.5 107v3 M172.5 113v3 M172.5 119v3 M172.5 125v3 M172.5 131v3 M172.5 137v3 M172.5 143v3 M172.5 149v3 M172.5 155v3 M172.5 161v3 M172.5 167v3 M172.5 173v3 M172.5 179v3 M172.5 185v3 M172.5 191v3 M172.5 197v3 M172.5 203v3 M172.5 209v3 M172.5 215v3 M172.5 221v3 M172.5 227v3 M172.5 233v3 M172.5 239v3 M172.5 245v3 M172.5 251v3 M172.5 257v3 M172.5 263v3 M172.5 269v3 M172.5 275v3 M172.5 281v3 M172.5 287v3 M172.5 293v3 M172.5 299v3 M172.5 305v3 M172.5 311v3 M172.5 317v3 M172.5 323v3 M172.5 329v3 M172.5 335v3 M172.5 341v3 M172.5 347v3 M172.5 353v3 M172.5 359v3 M172.5 365v3 M172.5 371v3 M172.5 377v3 M172.5 383v3 M172.5 389v3 M172.5 395v3 M172.5 401v3 M172.5 407v3 M172.5 413v3 M172.5 419v3 M172.5 425v3 M172.5 431v3 M172.5 437v3 M172.5 443v3 M172.5 449v3 M172.5 455v3 M172.5 461v3 M172.5 467v3 M172.5 473v3 M172.5 479v3 M172.5 485v3 M172.5 491v3 M172.5 497v3 M172.5 503v3 M172.5 509v3 M172.5 515v3 M172.5 521v3 M172.5 527v3 M172.5 533v3 M172.5 539v3 M172.5 545v3 M172.5 551v2 M204.5 36v2 M204.5 41v3 M204.5 47v3 M204.5 53v3 M204.5 59v3 M204.5 65v3 M204.5 71v3 M204.5 77v3 M204.5 83v3 M204.5 89v3 M204.5 95v3 M204.5 101v3 M204.5 107v3 M204.5 113v3 M204.5 119v3 M204.5 125v3 M204.5 131v3 M204.5 137v3 M204.5 143v3 M204.5 149v3 M204.5 155v3 M204.5 161v3 M204.5 167v3 M204.5 173v3 M204.5 179v3 M204.5 185v3 M204.5 191v3 M204.5 197v3 M204.5 203v3 M204.5 209v3 M204.5 215v3 M204.5 221v3 M204.5 227v3 M204.5 233v3 M204.5 239v3 M204.5 245v3 M204.5 251v3 M204.5 257v3 M204.5 263v3 M204.5 269v3 M204.5 275v3 M204.5 281v3 M204.5 287v3 M204.5 293v3 M204.5 299v3 M204.5 305v3 M204.5 311v3 M204.5 317v3 M204.5 323v3 M204.5 329v3 M204.5 335v3 M204.5 341v3 M204.5 347v3 M204.5 353v3 M204.5 359v3 M204.5 365v3 M204.5 371v3 M204.5 377v3 M204.5 383v3 M204.5 389v3 M204.5 395v3 M204.5 401v3 M204.5 407v3 M204.5 413v3 M204.5 419v3 M204.5 425v3 M204.5 431v3 M204.5 437v3 M204.5 443v3 M204.5 449v3 M204.5 455v3 M204.5 461v3 M204.5 467v3 M204.5 473v3 M204.5 479v3 M204.5 485v3 M204.5 491v3 M204.5 497v3 M204.5 503v3 M204.5 509v3 M204.5 515v3 M204.5 521v3 M204.5 527v3 M204.5 533v3 M204.5 539v3 M204.5 545v3 M204.5 551v2 M236.5 36v2 M236.5 41v3 M236.5 47v3 M236.5 53v3 M236.5 59v3 M236.5 65v3 M236.5 71v3 M236.5 77v3 M236.5 83v3 M236.5 89v3 M236.5 95v3 M236.5 101v3 M236.5 107v3 M236.5 113v3 M236.5 119v3 M236.5 125v3 M236.5 131v3 M236.5 137v3 M236.5 143v3 M236.5 149v3 M236.5 155v3 M236.5 161v3 M236.5 167v3 M236.5 173v3 M236.5 179v3 M236.5 185v3 M236.5 191v3 M236.5 197v3 M236.5 203v3 M236.5 209v3 M236.5 215v3 M236.5 221v3 M236.5 227v3 M236.5 233v3 M236.5 239v3 M236.5 245v3 M236.5 251v3 M236.5 257v3 M236.5 263v3 M236.5 269v3 M236.5 275v3 M236.5 281v3 M236.5 287v3 M236.5 293v3 M236.5 299v3 M236.5 305v3 M236.5 311v3 M236.5 317v3 M236.5 323v3 M236.5 329v3 M236.5 335v3 M236.5 341v3 M236.5 347v3 M236.5 353v3 M236.5 359v3 M236.5 365v3 M236.5 371v3 M236.5 377v3 M236.5 383v3 M236.5 389v3 M236.5 395v3 M236.5 401v3 M236.5 407v3 M236.5 413v3 M236.5 419v3 M236.5 425v3 M236.5 431v3 M236.5 437v3 M236.5 443v3 M236.5 449v3 M236.5 455v3 M236.5 461v3 M236.5 467v3 M236.5 473v3 M236.5 479v3 M236.5 485v3 M236.5 491v3 M236.5 497v3 M236.5 503v3 M236.5 509v3 M236.5 515v3 M236.5 521v3 M236.5 527v3 M236.5 533v3 M236.5 539v3 M236.5 545v3 M236.5 551v2 M268.5 36v2 M268.5 41v3 M268.5 47v3 M268.5 53v3 M268.5 59v3 M268.5 65v3 M268.5 71v3 M268.5 77v3 M268.5 83v3 M268.5 89v3 M268.5 95v3 M268.5 101v3 M268.5 107v3 M268.5 113v3 M268.5 119v3 M268.5 125v3 M268.5 131v3 M268.5 137v3 M268.5 143v3 M268.5 149v3 M268.5 155v3 M268.5 161v3 M268.5 167v3 M268.5 173v3 M268.5 179v3 M268.5 185v3 M268.5 191v3 M268.5 197v3 M268.5 203v3 M268.5 209v3 M268.5 215v3 M268.5 221v3 M268.5 227v3 M268.5 233v3 M268.5 239v3 M268.5 245v3 M268.5 251v3 M268.5 257v3 M268.5 263v3 M268.5 269v3 M268.5 275v3 M268.5 281v3 M268.5 287v3 M268.5 293v3 M268.5 299v3 M268.5 305v3 M268.5 311v3 M268.5 317v3 M268.5 323v3 M268.5 329v3 M268.5 335v3 M268.5 341v3 M268.5 347v3 M268.5 353v3 M268.5 359v3 M268.5 365v3 M268.5 371v3 M268.5 377v3 M268.5 383v3 M268.5 389v3 M268.5 395v3 M268.5 401v3 M268.5 407v3 M268.5 413v3 M268.5 419v3 M268.5 425v3 M268.5 431v3 M268.5 437v3 M268.5 443v3 M268.5 449v3 M268.5 455v3 M268.5 461v3 M268.5 467v3 M268.5 473v3 M268.5 479v3 M268.5 485v3 M268.5 491v3 M268.5 497v3 M268.5 503v3 M268.5 509v3 M268.5 515v3 M268.5 521v3 M268.5 527v3 M268.5 533v3 M268.5 539v3 M268.5 545v3 M268.5 551v2 M300.5 36v2 M300.5 41v3 M300.5 47v3 M300.5 53v3 M300.5 59v3 M300.5 65v3 M300.5 71v3 M300.5 77v3 M300.5 83v3 M300.5 89v3 M300.5 95v3 M300.5 101v3 M300.5 107v3 M300.5 113v3 M300.5 119v3 M300.5 125v3 M300.5 131v3 M300.5 137v3 M300.5 143v3 M300.5 149v3 M300.5 155v3 M300.5 161v3 M300.5 167v3 M300.5 173v3 M300.5 179v3 M300.5 185v3 M300.5 191v3 M300.5 197v3 M300.5 203v3 M300.5 209v3 M300.5 215v3 M300.5 221v3 M300.5 227v3 M300.5 233v3 M300.5 239v3 M300.5 245v3 M300.5 251v3 M300.5 257v3 M300.5 263v3 M300.5 269v3 M300.5 275v3 M300.5 281v3 M300.5 287v3 M300.5 293v3 M300.5 299v3 M300.5 305v3 M300.5 311v3 M300.5 317v3 M300.5 323v3 M300.5 329v3 M300.5 335v3 M300.5 341v3 M300.5 347v3 M300.5 353v3 M300.5 359v3 M300.5 365v3 M300.5 371v3 M300.5 377v3 M300.5 383v3 M300.5 389v3 M300.5 395v3 M300.5 401v3 M300.5 407v3 M300.5 413v3 M300.5 419v3 M300.5 425v3 M300.5 431v3 M300.5 437v3 M300.5 443v3 M300.5 449v3 M300.5 455v3 M300.5 461v3 M300.5 467v3 M300.5 473v3 M300.5 479v3 M300.5 485v3 M300.5 491v3 M300.5 497v3 M300.5 503v3 M300.5 509v3 M300.5 515v3 M300.5 521v3 M300.5 527v3 M300.5 533v3 M300.5 539v3 M300.5 545v3 M300.5 551v2 M332.5 36v2 M332.5 41v3 M332.5 47v3 M332.5 53v3 M332.5 59v3 M332.5 65v3 M332.5 71v3 M332.5 77v3 M332.5 83v3 M332.5 89v3 M332.5 95v3 M332.5 101v3 M332.5 107v3 M332.5 113v3 M332.5 119v3 M332.5 125v3 M332.5 131v3 M332.5 137v3 M332.5 143v3 M332.5 149v3 M332.5 155v3 M332.5 161v3 M332.5 167v3 M332.5 173v3 M332.5 179v3 M332.5 185v3 M332.5 191v3 M332.5 197v3 M332.5 203v3 M332.5 209v3 M332.5 215v3 M332.5 221v3 M332.5 227v3 M332.5 233v3 M332.5 239v3 M332.5 245v3 M332.5 251v3 M332.5 257v3 M332.5 263v3 M332.5 269v3 M332.5 275v3 M332.5 281v3 M332.5 287v3 M332.5 293v3 M332.5 299v3 M332.5 305v3 M332.5 311v3 M332.5 317v3 M332.5 323v3 M332.5 329v3 M332.5 335v3 M332.5 341v3 M332.5 347v3 M332.5 353v3 M332.5 359v3 M332.5 365v3 M332.5 371v3 M332.5 377v3 M332.5 383v3 M332.5 389v3 M332.5 395v3 M332.5 401v3 M332.5 407v3 M332.5 413v3 M332.5 419v3 M332.5 425v3 M332.5 431v3 M332.5 437v3 M332.5 443v3 M332.5 449v3 M332.5 455v3 M332.5 461v3 M332.5 467v3 M332.5 473v3 M332.5 479v3 M332.5 485v3 M332.5 491v3 M332.5 497v3 M332.5 503v3 M332.5 509v3 M332.5 515v3 M332.5 521v3 M332.5 527v3 M332.5 533v3 M332.5 539v3 M332.5 545v3 M332.5 551v2 M364.5 36v2 M364.5 41v3 M364.5 47v3 M364.5 53v3 M364.5 59v3 M364.5 65v3 M364.5 71v3 M364.5 77v3 M364.5 83v3 M364.5 89v3 M364.5 95v3 M364.5 101v3 M364.5 107v3 M364.5 113v3 M364.5 119v3 M364.5 125v3 M364.5 131v3 M364.5 137v3 M364.5 143v3 M364.5 149v3 M364.5 155v3 M364.5 161v3 M364.5 167v3 M364.5 173v3 M364.5 179v3 M364.5 185v3 M364.5 191v3 M364.5 197v3 M364.5 203v3 M364.5 209v3 M364.5 215v3 M364.5 221v3 M364.5 227v3 M364.5 233v3 M364.5 239v3 M364.5 245v3 M364.5 251v3 M364.5 257v3 M364.5 263v3 M364.5 269v3 M364.5 275v3 M364.5 281v3 M364.5 287v3 M364.5 293v3 M364.5 299v3 M364.5 305v3 M364.5 311v3 M364.5 317v3 M364.5 323v3 M364.5 329v3 M364.5 335v3 M364.5 341v3 M364.5 347v3 M364.5 353v3 M364.5 359v3 M364.5 365v3 M364.5 371v3 M364.5 377v3 M364.5 383v3 M364.5 389v3 M364.5 395v3 M364.5 401v3 M364.5 407v3 M364.5 413v3 M364.5 419v3 M364.5 425v3 M364.5 431v3 M364.5 437v3 M364.5 443v3 M364.5 449v3 M364.5 455v3 M364.5 461v3 M364.5 467v3 M364.5 473v3 M364.5 479v3 M364.5 485v3 M364.5 491v3 M364.5 497v3 M364.5 503v3 M364.5 509v3 M364.5 515v3 M364.5 521v3 M364.5 527v3 M364.5 533v3 M364.5 539v3 M364.5 545v3 M364.5 551v2 M396.5 36v2 M396.5 41v3 M396.5 47v3 M396.5 53v3 M396.5 59v3 M396.5 65v3 M396.5 71v3 M396.5 77v3 M396.5 83v3 M396.5 89v3 M396.5 95v3 M396.5 101v3 M396.5 107v3 M396.5 113v3 M396.5 119v3 M396.5 125v3 M396.5 131v3 M396.5 137v3 M396.5 143v3 M396.5 149v3 M396.5 155v3 M396.5 161v3 M396.5 167v3 M396.5 173v3 M396.5 179v3 M396.5 185v3 M396.5 191v3 M396.5 197v3 M396.5 203v3 M396.5 209v3 M396.5 215v3 M396.5 221v3 M396.5 227v3 M396.5 233v3 M396.5 239v3 M396.5 245v3 M396.5 251v3 M396.5 257v3 M396.5 263v3 M396.5 269v3 M396.5 275v3 M396.5 281v3 M396.5 287v3 M396.5 293v3 M396.5 299v3 M396.5 305v3 M396.5 311v3 M396.5 317v3 M396.5 323v3 M396.5 329v3 M396.5 335v3 M396.5 341v3 M396.5 347v3 M396.5 353v3 M396.5 359v3 M396.5 365v3 M396.5 371v3 M396.5 377v3 M396.5 383v3 M396.5 389v3 M396.5 395v3 M396.5 401v3 M396.5 407v3 M396.5 413v3 M396.5 419v3 M396.5 425v3 M396.5 431v3 M396.5 437v3 M396.5 443v3 M396.5 449v3 M396.5 455v3 M396.5 461v3 M396.5 467v3 M396.5 473v3 M396.5 479v3 M396.5 485v3 M396.5 491v3 M396.5 497v3 M396.5 503v3 M396.5 509v3 M396.5 515v3 M396.5 521v3 M396.5 527v3 M396.5 533v3 M396.5 539v3 M396.5 545v3 M396.5 551v2 M428.5 36v2 M428.5 41v3 M428.5 47v3 M428.5 53v3 M428.5 59v3 M428.5 65v3 M428.5 71v3 M428.5 77v3 M428.5 83v3 M428.5 89v3 M428.5 95v3 M428.5 101v3 M428.5 107v3 M428.5 113v3 M428.5 119v3 M428.5 125v3 M428.5 131v3 M428.5 137v3 M428.5 143v3 M428.5 149v3 M428.5 155v3 M428.5 161v3 M428.5 167v3 M428.5 173v3 M428.5 179v3 M428.5 185v3 M428.5 191v3 M428.5 197v3 M428.5 203v3 M428.5 209v3 M428.5 215v3 M428.5 221v3 M428.5 227v3 M428.5 233v3 M428.5 239v3 M428.5 245v3 M428.5 251v3 M428.5 257v3 M428.5 263v3 M428.5 269v3 M428.5 275v3 M428.5 281v3 M428.5 287v3 M428.5 293v3 M428.5 299v3 M428.5 305v3 M428.5 311v3 M428.5 317v3 M428.5 323v3 M428.5 329v3 M428.5 335v3 M428.5 341v3 M428.5 347v3 M428.5 353v3 M428.5 359v3 M428.5 365v3 M428.5 371v3 M428.5 377v3 M428.5 383v3 M428.5 389v3 M428.5 395v3 M428.5 401v3 M428.5 407v3 M428.5 413v3 M428.5 419v3 M428.5 425v3 M428.5 431v3 M428.5 437v3 M428.5 443v3 M428.5 449v3 M428.5 455v3 M428.5 461v3 M428.5 467v3 M428.5 473v3 M428.5 479v3 M428.5 485v3 M428.5 491v3 M428.5 497v3 M428.5 503v3 M428.5 509v3 M428.5 515v3 M428.5 521v3 M428.5 527v3 M428.5 533v3 M428.5 539v3 M428.5 545v3 M428.5 551v2 M460.5 36v2 M460.5 41v3 M460.5 47v3 M460.5 53v3 M460.5 59v3 M460.5 65v3 M460.5 71v3 M460.5 77v3 M460.5 83v3 M460.5 89v3 M460.5 95v3 M460.5 101v3 M460.5 107v3 M460.5 113v3 M460.5 119v3 M460.5 125v3 M460.5 131v3 M460.5 137v3 M460.5 143v3 M460.5 149v3 M460.5 155v3 M460.5 161v3 M460.5 167v3 M460.5 173v3 M460.5 179v3 M460.5 185v3 M460.5 191v3 M460.5 197v3 M460.5 203v3 M460.5 209v3 M460.5 215v3 M460.5 221v3 M460.5 227v3 M460.5 233v3 M460.5 239v3 M460.5 245v3 M460.5 251v3 M460.5 257v3 M460.5 263v3 M460.5 269v3 M460.5 275v3 M460.5 281v3 M460.5 287v3 M460.5 293v3 M460.5 299v3 M460.5 305v3 M460.5 311v3 M460.5 317v3 M460.5 323v3 M460.5 329v3 M460.5 335v3 M460.5 341v3 M460.5 347v3 M460.5 353v3 M460.5 359v3 M460.5 365v3 M460.5 371v3 M460.5 377v3 M460.5 383v3 M460.5 389v3 M460.5 395v3 M460.5 401v3 M460.5 407v3 M460.5 413v3 M460.5 419v3 M460.5 425v3 M460.5 431v3 M460.5 437v3 M460.5 443v3 M460.5 449v3 M460.5 455v3 M460.5 461v3 M460.5 467v3 M460.5 473v3 M460.5 479v3 M460.5 485v3 M460.5 491v3 M460.5 497v3 M460.5 503v3 M460.5 509v3 M460.5 515v3 M460.5 521v3 M460.5 527v3 M460.5 533v3 M460.5 539v3 M460.5 545v3 M460.5 551v2 M492.5 36v2 M492.5 41v3 M492.5 47v3 M492.5 53v3 M492.5 59v3 M492.5 65v3 M492.5 71v3 M492.5 77v3 M492.5 83v3 M492.5 89v3 M492.5 95v3 M492.5 101v3 M492.5 107v3 M492.5 113v3 M492.5 119v3 M492.5 125v3 M492.5 131v3 M492.5 137v3 M492.5 143v3 M492.5 149v3 M492.5 155v3 M492.5 161v3 M492.5 167v3 M492.5 173v3 M492.5 179v3 M492.5 185v3 M492.5 191v3 M492.5 197v3 M492.5 203v3 M492.5 209v3 M492.5 215v3 M492.5 221v3 M492.5 227v3 M492.5 233v3 M492.5 239v3 M492.5 245v3 M492.5 251v3 M492.5 257v3 M492.5 263v3 M492.5 269v3 M492.5 275v3 M492.5 281v3 M492.5 287v3 M492.5 293v3 M492.5 299v3 M492.5 305v3 M492.5 311v3 M492.5 317v3 M492.5 323v3 M492.5 329v3 M492.5 335v3 M492.5 341v3 M492.5 347v3 M492.5 353v3 M492.5 359v3 M492.5 365v3 M492.5 371v3 M492.5 377v3 M492.5 383v3 M492.5 389v3 M492.5 395v3 M492.5 401v3 M492.5 407v3 M492.5 413v3 M492.5 419v3 M492.5 425v3 M492.5 431v3 M492.5 437v3 M492.5 443v3 M492.5 449v3 M492.5 455v3 M492.5 461v3 M492.5 467v3 M492.5 473v3 M492.5 479v3 M492.5 485v3 M492.5 491v3 M492.5 497v3 M492.5 503v3 M492.5 509v3 M492.5 515v3 M492.5 521v3 M492.5 527v3 M492.5 533v3 M492.5 539v3 M492.5 545v3 M492.5 551v2 M524.5 36v2 M524.5 41v3 M524.5 47v3 M524.5 53v3 M524.5 59v3 M524.5 65v3 M524.5 71v3 M524.5 77v3 M524.5 83v3 M524.5 89v3 M524.5 95v3 M524.5 101v3 M524.5 107v3 M524.5 113v3 M524.5 119v3 M524.5 125v3 M524.5 131v3 M524.5 137v3 M524.5 143v3 M524.5 149v3 M524.5 155v3 M524.5 161v3 M524.5 167v3 M524.5 173v3 M524.5 179v3 M524.5 185v3 M524.5 191v3 M524.5 197v3 M524.5 203v3 M524.5 209v3 M524.5 215v3 M524.5 221v3 M524.5 227v3 M524.5 233v3 M524.5 239v3 M524.5 245v3 M524.5 251v3 M524.5 257v3 M524.5 263v3 M524.5 269v3 M524.5 275v3 M524.5 281v3 M524.5 287v3 M524.5 293v3 M524.5 299v3 M524.5 305v3 M524.5 311v3 M524.5 317v3 M524.5 323v3 M524.5 329v3 M524.5 335v3 M524.5 341v3 M524.5 347v3 M524.5 353v3 M524.5 359v3 M524.5 365v3 M524.5 371v3 M524.5 377v3 M524.5 383v3 M524.5 389v3 M524.5 395v3 M524.5 401v3 M524.5 407v3 M524.5 413v3 M524.5 419v3 M524.5 425v3 M524.5 431v3 M524.5 437v3 M524.5 443v3 M524.5 449v3 M524.5 455v3 M524.5 461v3 M524.5 467v3 M524.5 473v3 M524.5 479v3 M524.5 485v3 M524.5 491v3 M524.5 497v3 M524.5 503v3 M524.5 509v3 M524.5 515v3 M524.5 521v3 M524.5 527v3 M524.5 533v3 M524.5 539v3 M524.5 545v3 M524.5 551v2 M556.5 36v2 M556.5 41v3 M556.5 47v3 M556.5 53v3 M556.5 59v3 M556.5 65v3 M556.5 71v3 M556.5 77v3 M556.5 83v3 M556.5 89v3 M556.5 95v3 M556.5 101v3 M556.5 107v3 M556.5 113v3 M556.5 119v3 M556.5 125v3 M556.5 131v3 M556.5 137v3 M556.5 143v3 M556.5 149v3 M556.5 155v3 M556.5 161v3 M556.5 167v3 M556.5 173v3 M556.5 179v3 M556.5 185v3 M556.5 191v3 M556.5 197v3 M556.5 203v3 M556.5 209v3 M556.5 215v3 M556.5 221v3 M556.5 227v3 M556.5 233v3 M556.5 239v3 M556.5 245v3 M556.5 251v3 M556.5 257v3 M556.5 263v3 M556.5 269v3 M556.5 275v3 M556.5 281v3 M556.5 287v3 M556.5 293v3 M556.5 299v3 M556.5 305v3 M556.5 311v3 M556.5 317v3 M556.5 323v3 M556.5 329v3 M556.5 335v3 M556.5 341v3 M556.5 347v3 M556.5 353v3 M556.5 359v3 M556.5 365v3 M556.5 371v3 M556.5 377v3 M556.5 383v3 M556.5 389v3 M556.5 395v3 M556.5 401v3 M556.5 407v3 M556.5 413v3 M556.5 419v3 M556.5 425v3 M556.5 431v3 M556.5 437v3 M556.5 443v3 M556.5 449v3 M556.5 455v3 M556.5 461v3 M556.5 467v3 M556.5 473v3 M556.5 479v3 M556.5 485v3 M556.5 491v3 M556.5 497v3 M556.5 503v3 M556.5 509v3 M556.5 515v3 M556.5 521v3 M556.5 527v3 M556.5 533v3 M556.5 539v3 M556.5 545v3 M556.5 551v2 M588.5 36v2 M588.5 41v3 M588.5 47v3 M588.5 53v3 M588.5 59v3 M588.5 65v3 M588.5 71v3 M588.5 77v3 M588.5 83v3 M588.5 89v3 M588.5 95v3 M588.5 101v3 M588.5 107v3 M588.5 113v3 M588.5 119v3 M588.5 125v3 M588.5 131v3 M588.5 137v3 M588.5 143v3 M588.5 149v3 M588.5 155v3 M588.5 161v3 M588.5 167v3 M588.5 173v3 M588.5 179v3 M588.5 185v3 M588.5 191v3 M588.5 197v3 M588.5 203v3 M588.5 209v3 M588.5 215v3 M588.5 221v3 M588.5 227v3 M588.5 233v3 M588.5 239v3 M588.5 245v3 M588.5 251v3 M588.5 257v3 M588.5 263v3 M588.5 269v3 M588.5 275v3 M588.5 281v3 M588.5 287v3 M588.5 293v3 M588.5 299v3 M588.5 305v3 M588.5 311v3 M588.5 317v3 M588.5 323v3 M588.5 329v3 M588.5 335v3 M588.5 341v3 M588.5 347v3 M588.5 353v3 M588.5 359v3 M588.5 365v3 M588.5 371v3 M588.5 377v3 M588.5 383v3 M588.5 389v3 M588.5 395v3 M588.5 401v3 M588.5 407v3 M588.5 413v3 M588.5 419v3 M588.5 425v3 M588.5 431v3 M588.5 437v3 M588.5 443v3 M588.5 449v3 M588.5 455v3 M588.5 461v3 M588.5 467v3 M588.5 473v3 M588.5 479v3 M588.5 485v3 M588.5 491v3 M588.5 497v3 M588.5 503v3 M588.5 509v3 M588.5 515v3 M588.5 521v3 M588.5 527v3 M588.5 533v3 M588.5 539v3 M588.5 545v3 M588.5 551v2 M620.5 36v2 M620.5 41v3 M620.5 47v3 M620.5 53v3 M620.5 59v3 M620.5 65v3 M620.5 71v3 M620.5 77v3 M620.5 83v3 M620.5 89v3 M620.5 95v3 M620.5 101v3 M620.5 107v3 M620.5 113v3 M620.5 119v3 M620.5 125v3 M620.5 131v3 M620.5 137v3 M620.5 143v3 M620.5 149v3 M620.5 155v3 M620.5 161v3 M620.5 167v3 M620.5 173v3 M620.5 179v3 M620.5 185v3 M620.5 191v3 M620.5 197v3 M620.5 203v3 M620.5 209v3 M620.5 215v3 M620.5 221v3 M620.5 227v3 M620.5 233v3 M620.5 239v3 M620.5 245v3 M620.5 251v3 M620.5 257v3 M620.5 263v3 M620.5 269v3 M620.5 275v3 M620.5 281v3 M620.5 287v3 M620.5 293v3 M620.5 299v3 M620.5 305v3 M620.5 311v3 M620.5 317v3 M620.5 323v3 M620.5 329v3 M620.5 335v3 M620.5 341v3 M620.5 347v3 M620.5 353v3 M620.5 359v3 M620.5 365v3 M620.5 371v3 M620.5 377v3 M620.5 383v3 M620.5 389v3 M620.5 395v3 M620.5 401v3 M620.5 407v3 M620.5 413v3 M620.5 419v3 M620.5 425v3 M620.5 431v3 M620.5 437v3 M620.5 443v3 M620.5 449v3 M620.5 455v3 M620.5 461v3 M620.5 467v3 M620.5 473v3 M620.5 479v3 M620.5 485v3 M620.5 491v3 M620.5 497v3 M620.5 503v3 M620.5 509v3 M620.5 515v3 M620.5 521v3 M620.5 527v3 M620.5 533v3 M620.5 539v3 M620.5 545v3 M620.5 551v2 M652.5 36v2 M652.5 41v3 M652.5 47v3 M652.5 53v3 M652.5 59v3 M652.5 65v3 M652.5 71v3 M652.5 77v3 M652.5 83v3 M652.5 89v3 M652.5 95v3 M652.5 101v3 M652.5 107v3 M652.5 113v3 M652.5 119v3 M652.5 125v3 M652.5 131v3 M652.5 137v3 M652.5 143v3 M652.5 149v3 M652.5 155v3 M652.5 161v3 M652.5 167v3 M652.5 173v3 M652.5 179v3 M652.5 185v3 M652.5 191v3 M652.5 197v3 M652.5 203v3 M652.5 209v3 M652.5 215v3 M652.5 221v3 M652.5 227v3 M652.5 233v3 M652.5 239v3 M652.5 245v3 M652.5 251v3 M652.5 257v3 M652.5 263v3 M652.5 269v3 M652.5 275v3 M652.5 281v3 M652.5 287v3 M652.5 293v3 M652.5 299v3 M652.5 305v3 M652.5 311v3 M652.5 317v3 M652.5 323v3 M652.5 329v3 M652.5 335v3 M652.5 341v3 M652.5 347v3 M652.5 353v3 M652.5 359v3 M652.5 365v3 M652.5 371v3 M652.5 377v3 M652.5 383v3 M652.5 389v3 M652.5 395v3 M652.5 401v3 M652.5 407v3 M652.5 413v3 M652.5 419v3 M652.5 425v3 M652.5 431v3 M652.5 437v3 M652.5 443v3 M652.5 449v3 M652.5 455v3 M652.5 461v3 M652.5 467v3 M652.5 473v3 M652.5 479v3 M652.5 485v3 M652.5 491v3 M652.5 497v3 M652.5 503v3 M652.5 509v3 M652.5 515v3 M652.5 521v3 M652.5 527v3 M652.5 533v3 M652.5 539v3 M652.5 545v3 M652.5 551v2" stroke="#8093a8" stroke-width="1" fill="none"/>
<path d="M13 519.5h3 M19 519.5h3 M25 519.5h3 M31 519.5h3 M37 519.5h3 M43 519.5h3 M49 519.5h3 M55 519.5h3 M61 519.5h3 M67 519.5h3 M73 519.5h3 M79 519.5h3 M85 519.5h3 M91 519.5h3 M97 519.5h3 M103 519.5h3 M109 519.5h3 M115 519.5h3 M121 519.5h3 M127 519.5h3 M133 519.5h3 M139 519.5h3 M145 519.5h3 M151 519.5h3 M157 519.5h3 M163 519.5h3 M169 519.5h3 M175 519.5h3 M181 519.5h3 M187 519.5h3 M193 519.5h3 M199 519.5h3 M205 519.5h3 M211 519.5h3 M217 519.5h3 M223 519.5h3 M229 519.5h3 M235 519.5h3 M241 519.5h3 M247 519.5h3 M253 519.5h3 M259 519.5h3 M265 519.5h3 M271 519.5h3 M277 519.5h3 M283 519.5h3 M289 519.5h3 M295 519.5h3 M301 519.5h3 M307 519.5h3 M313 519.5h3 M319 519.5h3 M325 519.5h3 M331 519.5h3 M337 519.5h3 M343 519.5h3 M349 519.5h3 M355 519.5h3 M361 519.5h3 M367 519.5h3 M373 519.5h3 M379 519.5h3 M385 519.5h3 M391 519.5h3 M397 519.5h3 M403 519.5h3 M409 519.5h3 M415 519.5h3 M421 519.5h3 M427 519.5h3 M433 519.5h3 M439 519.5h3 M445 519.5h3 M451 519.5h3 M457 519.5h3 M463 519.5h3 M469 519.5h3 M475 519.5h3 M481 519.5h3 M487 519.5h3 M493 519.5h3 M499 519.5h3 M505 519.5h3 M511 519.5h3 M517 519.5h3 M523 519.5h3 M529 519.5h3 M535 519.5h3 M541 519.5h3 M547 519.5h3 M553 519.5h3 M559 519.5h3 M565 519.5h3 M571 519.5h3 M577 519.5h3 M583 519.5h3 M589 519.5h3 M595 519.5h3 M601 519.5h3 M607 519.5h3 M613 519.5h3 M619 519.5h3 M625 519.5h3 M631 519.5h3 M637 519.5h3 M643 519.5h3 M649 519.5h3 M655 519.5h3 M661 519.5h3 M667 519.5h3 M673 519.5h3" stroke="#d3d3d3" stroke-width="1" fill="none"/>
<path d="M11.5 35.5H677.5V380.5H11.5Z M11.5 382.5H677.5V553.5H11.5Z" stroke="#fff" fill="none"/>
<path d="M678 47.5h2 M678 80.5h2 M678 113.5h2 M678 146.5h2 M678 179.5h2 M678 212.5h2 M678 245.5h2 M678 278.5h2 M678 311.5h2 M678 344.5h2 M678 377.5h2 M678 519.5h2 M678 384.5h1 M678 552.5h1 M12.5 554v3 M76.5 554v3 M140.5 554v3 M204.5 554v3 M268.5 554v3 M332.5 554v3 M396.5 554v3 M460.5 554v3 M524.5 554v3 M588.5 554v3 M652.5 554v3" stroke="#fff" fill="none"/>
<g clip-path="url(#mainclip)"><rect x="12" y="327" width="1" height="45" fill="#00ff00"/><rect x="10" y="333" width="5" height="34" fill="#00ff00"/><rect x="11" y="334" width="3" height="32" fill="#000"/><rect x="20" y="330" width="1" height="22" fill="#00ff00"/><rect x="18" y="332" width="5" height="6" fill="#00ff00"/><rect x="19" y="333" width="3" height="4" fill="#fff"/><rect x="28" y="329" width="1" height="15" fill="#00ff00"/><rect x="26" y="334" width="5" height="4" fill="#00ff00"/><rect x="27" y="335" width="3" height="2" fill="#000"/><rect x="36" y="331" width="1" height="12" fill="#00ff00"/><rect x="34" y="334" width="5" height="1" fill="#00ff00"/><rect x="44" y="329" width="1" height="10" fill="#00ff00"/><rect x="42" y="331" width="5" height="4" fill="#00ff00"/><rect x="43" y="332" width="3" height="2" fill="#000"/><rect x="52" y="329" width="1" height="6" fill="#00ff00"/><rect x="50" y="329" width="5" height="3" fill="#00ff00"/><rect x="51" y="330" width="3" height="1" fill="#000"/><rect x="60" y="329" width="1" height="6" fill="#00ff00"/><rect x="58" y="329" width="5" height="5" fill="#00ff00"/><rect x="59" y="330" width="3" height="3" fill="#fff"/><rect x="68" y="332" width="1" height="8" fill="#00ff00"/><rect x="66" y="333" width="5" height="7" fill="#00ff00"/><rect x="67" y="334" width="3" height="5" fill="#fff"/><rect x="76" y="335" width="1" height="6" fill="#00ff00"/><rect x="74" y="336" width="5" height="5" fill="#00ff00"/><rect x="75" y="337" width="3" height="3" fill="#000"/><rect x="84" y="331" width="1" height="7" fill="#00ff00"/><rect x="82" y="333" width="5" height="3" fill="#00ff00"/><rect x="83" y="334" width="3" height="1" fill="#000"/><rect x="92" y="311" width="1" height="23" fill="#00ff00"/><rect x="90" y="314" width="5" height="20" fill="#00ff00"/><rect x="91" y="315" width="3" height="18" fill="#000"/><rect x="100" y="299" width="1" height="26" fill="#00ff00"/><rect x="98" y="304" width="5" height="11" fill="#00ff00"/><rect x="99" y="305" width="3" height="9" fill="#000"/><rect x="108" y="284" width="1" height="27" fill="#00ff00"/><rect x="106" y="295" width="5" height="10" fill="#00ff00"/><rect x="107" y="296" width="3" height="8" fill="#000"/><rect x="116" y="290" width="1" height="14" fill="#00ff00"/><rect x="114" y="292" width="5" height="5" fill="#00ff00"/><rect x="115" y="293" width="3" height="3" fill="#000"/><rect x="124" y="292" width="1" height="9" fill="#00ff00"/><rect x="122" y="292" width="5" height="7" fill="#00ff00"/><rect x="123" y="293" width="3" height="5" fill="#fff"/><rect x="132" y="293" width="1" height="8" fill="#00ff00"/><rect x="130" y="298" width="5" height="2" fill="#00ff00"/><rect x="140" y="290" width="1" height="13" fill="#00ff00"/><rect x="138" y="295" width="5" height="4" fill="#00ff00"/><rect x="139" y="296" width="3" height="2" fill="#000"/><rect x="148" y="273" width="1" height="24" fill="#00ff00"/><rect x="146" y="283" width="5" height="13" fill="#00ff00"/><rect x="147" y="284" width="3" height="11" fill="#000"/><rect x="156" y="280" width="1" height="16" fill="#00ff00"/><rect x="154" y="283" width="5" height="9" fill="#00ff00"/><rect x="155" y="284" width="3" height="7" fill="#fff"/><rect x="164" y="288" width="1" height="8" fill="#00ff00"/><rect x="162" y="289" width="5" height="3" fill="#00ff00"/><rect x="163" y="290" width="3" height="1" fill="#000"/><rect x="172" y="287" width="1" height="7" fill="#00ff00"/><rect x="170" y="289" width="5" height="1" fill="#00ff00"/><rect x="180" y="289" width="1" height="7" fill="#00ff00"/><rect x="178" y="289" width="5" height="5" fill="#00ff00"/><rect x="179" y="290" width="3" height="3" fill="#fff"/><rect x="188" y="287" width="1" height="8" fill="#00ff00"/><rect x="186" y="290" width="5" height="5" fill="#00ff00"/><rect x="187" y="291" width="3" height="3" fill="#000"/><rect x="196" y="285" width="1" height="8" fill="#00ff00"/><rect x="194" y="290" width="5" height="2" fill="#00ff00"/><rect x="204" y="286" width="1" height="7" fill="#00ff00"/><rect x="202" y="289" width="5" height="2" fill="#00ff00"/><rect x="212" y="288" width="1" height="5" fill="#00ff00"/><rect x="210" y="290" width="5" height="1" fill="#00ff00"/><rect x="220" y="289" width="1" height="15" fill="#00ff00"/><rect x="218" y="290" width="5" height="14" fill="#00ff00"/><rect x="219" y="291" width="3" height="12" fill="#fff"/><rect x="228" y="296" width="1" height="8" fill="#00ff00"/><rect x="226" y="299" width="5" height="5" fill="#00ff00"/><rect x="227" y="300" width="3" height="3" fill="#000"/><rect x="236" y="296" width="1" height="5" fill="#00ff00"/><rect x="234" y="298" width="5" height="1" fill="#00ff00"/><rect x="244" y="296" width="1" height="5" fill="#00ff00"/><rect x="242" y="298" width="5" height="2" fill="#00ff00"/><rect x="252" y="296" width="1" height="6" fill="#00ff00"/><rect x="250" y="299" width="5" height="1" fill="#00ff00"/><rect x="260" y="289" width="1" height="13" fill="#00ff00"/><rect x="258" y="299" width="5" height="2" fill="#00ff00"/><rect x="268" y="290" width="1" height="10" fill="#00ff00"/><rect x="266" y="293" width="5" height="3" fill="#00ff00"/><rect x="267" y="294" width="3" height="1" fill="#000"/><rect x="276" y="270" width="1" height="28" fill="#00ff00"/><rect x="274" y="285" width="5" height="10" fill="#00ff00"/><rect x="275" y="286" width="3" height="8" fill="#000"/><rect x="284" y="272" width="1" height="16" fill="#00ff00"/><rect x="282" y="278" width="5" height="8" fill="#00ff00"/><rect x="283" y="279" width="3" height="6" fill="#000"/><rect x="292" y="264" width="1" height="20" fill="#00ff00"/><rect x="290" y="279" width="5" height="4" fill="#00ff00"/><rect x="291" y="280" width="3" height="2" fill="#fff"/><rect x="300" y="275" width="1" height="35" fill="#00ff00"/><rect x="298" y="282" width="5" height="9" fill="#00ff00"/><rect x="299" y="283" width="3" height="7" fill="#fff"/><rect x="308" y="278" width="1" height="14" fill="#00ff00"/><rect x="306" y="280" width="5" height="12" fill="#00ff00"/><rect x="307" y="281" width="3" height="10" fill="#000"/><rect x="316" y="271" width="1" height="12" fill="#00ff00"/><rect x="314" y="274" width="5" height="7" fill="#00ff00"/><rect x="315" y="275" width="3" height="5" fill="#000"/><rect x="324" y="273" width="1" height="7" fill="#00ff00"/><rect x="322" y="274" width="5" height="3" fill="#00ff00"/><rect x="323" y="275" width="3" height="1" fill="#fff"/><rect x="332" y="274" width="1" height="9" fill="#00ff00"/><rect x="330" y="276" width="5" height="1" fill="#00ff00"/><rect x="340" y="273" width="1" height="8" fill="#00ff00"/><rect x="338" y="276" width="5" height="3" fill="#00ff00"/><rect x="339" y="277" width="3" height="1" fill="#fff"/><rect x="348" y="274" width="1" height="11" fill="#00ff00"/><rect x="346" y="276" width="5" height="3" fill="#00ff00"/><rect x="347" y="277" width="3" height="1" fill="#000"/><rect x="356" y="272" width="1" height="10" fill="#00ff00"/><rect x="354" y="276" width="5" height="2" fill="#00ff00"/><rect x="364" y="276" width="1" height="8" fill="#00ff00"/><rect x="362" y="277" width="5" height="2" fill="#00ff00"/><rect x="372" y="277" width="1" height="5" fill="#00ff00"/><rect x="370" y="278" width="5" height="1" fill="#00ff00"/><rect x="380" y="277" width="1" height="7" fill="#00ff00"/><rect x="378" y="278" width="5" height="6" fill="#00ff00"/><rect x="379" y="279" width="3" height="4" fill="#fff"/><rect x="388" y="274" width="1" height="20" fill="#00ff00"/><rect x="386" y="284" width="5" height="3" fill="#00ff00"/><rect x="387" y="285" width="3" height="1" fill="#fff"/><rect x="396" y="280" width="1" height="7" fill="#00ff00"/><rect x="394" y="280" width="5" height="7" fill="#00ff00"/><rect x="395" y="281" width="3" height="5" fill="#000"/><rect x="404" y="274" width="1" height="7" fill="#00ff00"/><rect x="402" y="275" width="5" height="6" fill="#00ff00"/><rect x="403" y="276" width="3" height="4" fill="#000"/><rect x="412" y="262" width="1" height="15" fill="#00ff00"/><rect x="410" y="265" width="5" height="11" fill="#00ff00"/><rect x="411" y="266" width="3" height="9" fill="#000"/><rect x="420" y="250" width="1" height="17" fill="#00ff00"/><rect x="418" y="250" width="5" height="16" fill="#00ff00"/><rect x="419" y="251" width="3" height="14" fill="#000"/><rect x="428" y="250" width="1" height="9" fill="#00ff00"/><rect x="426" y="250" width="5" height="3" fill="#00ff00"/><rect x="427" y="251" width="3" height="1" fill="#fff"/><rect x="436" y="248" width="1" height="9" fill="#00ff00"/><rect x="434" y="249" width="5" height="5" fill="#00ff00"/><rect x="435" y="250" width="3" height="3" fill="#000"/><rect x="444" y="249" width="1" height="6" fill="#00ff00"/><rect x="442" y="249" width="5" height="4" fill="#00ff00"/><rect x="443" y="250" width="3" height="2" fill="#fff"/><rect x="452" y="247" width="1" height="6" fill="#00ff00"/><rect x="450" y="248" width="5" height="5" fill="#00ff00"/><rect x="451" y="249" width="3" height="3" fill="#000"/><rect x="460" y="238" width="1" height="13" fill="#00ff00"/><rect x="458" y="242" width="5" height="8" fill="#00ff00"/><rect x="459" y="243" width="3" height="6" fill="#000"/><rect x="468" y="237" width="1" height="10" fill="#00ff00"/><rect x="466" y="240" width="5" height="3" fill="#00ff00"/><rect x="467" y="241" width="3" height="1" fill="#000"/><rect x="476" y="229" width="1" height="14" fill="#00ff00"/><rect x="474" y="235" width="5" height="6" fill="#00ff00"/><rect x="475" y="236" width="3" height="4" fill="#000"/><rect x="484" y="218" width="1" height="32" fill="#00ff00"/><rect x="482" y="222" width="5" height="14" fill="#00ff00"/><rect x="483" y="223" width="3" height="12" fill="#000"/><rect x="492" y="203" width="1" height="25" fill="#00ff00"/><rect x="490" y="206" width="5" height="17" fill="#00ff00"/><rect x="491" y="207" width="3" height="15" fill="#000"/><rect x="500" y="181" width="1" height="30" fill="#00ff00"/><rect x="498" y="188" width="5" height="18" fill="#00ff00"/><rect x="499" y="189" width="3" height="16" fill="#000"/><rect x="508" y="168" width="1" height="31" fill="#00ff00"/><rect x="506" y="173" width="5" height="16" fill="#00ff00"/><rect x="507" y="174" width="3" height="14" fill="#000"/><rect x="516" y="147" width="1" height="33" fill="#00ff00"/><rect x="514" y="154" width="5" height="20" fill="#00ff00"/><rect x="515" y="155" width="3" height="18" fill="#000"/><rect x="524" y="148" width="1" height="13" fill="#00ff00"/><rect x="522" y="153" width="5" height="2" fill="#00ff00"/><rect x="532" y="139" width="1" height="18" fill="#00ff00"/><rect x="530" y="149" width="5" height="5" fill="#00ff00"/><rect x="531" y="150" width="3" height="3" fill="#000"/><rect x="540" y="147" width="1" height="38" fill="#00ff00"/><rect x="538" y="148" width="5" height="14" fill="#00ff00"/><rect x="539" y="149" width="3" height="12" fill="#fff"/><rect x="548" y="128" width="1" height="35" fill="#00ff00"/><rect x="546" y="141" width="5" height="22" fill="#00ff00"/><rect x="547" y="142" width="3" height="20" fill="#000"/><rect x="556" y="130" width="1" height="15" fill="#00ff00"/><rect x="554" y="138" width="5" height="4" fill="#00ff00"/><rect x="555" y="139" width="3" height="2" fill="#000"/><rect x="564" y="134" width="1" height="16" fill="#00ff00"/><rect x="562" y="138" width="5" height="1" fill="#00ff00"/><rect x="572" y="133" width="1" height="22" fill="#00ff00"/><rect x="570" y="138" width="5" height="13" fill="#00ff00"/><rect x="571" y="139" width="3" height="11" fill="#fff"/><rect x="580" y="125" width="1" height="36" fill="#00ff00"/><rect x="578" y="128" width="5" height="23" fill="#00ff00"/><rect x="579" y="129" width="3" height="21" fill="#000"/><rect x="588" y="105" width="1" height="25" fill="#00ff00"/><rect x="586" y="111" width="5" height="18" fill="#00ff00"/><rect x="587" y="112" width="3" height="16" fill="#000"/><rect x="596" y="97" width="1" height="24" fill="#00ff00"/><rect x="594" y="98" width="5" height="14" fill="#00ff00"/><rect x="595" y="99" width="3" height="12" fill="#000"/><rect x="604" y="92" width="1" height="34" fill="#00ff00"/><rect x="602" y="98" width="5" height="24" fill="#00ff00"/><rect x="603" y="99" width="3" height="22" fill="#fff"/><rect x="612" y="101" width="1" height="21" fill="#00ff00"/><rect x="610" y="105" width="5" height="17" fill="#00ff00"/><rect x="611" y="106" width="3" height="15" fill="#000"/><rect x="620" y="101" width="1" height="9" fill="#00ff00"/><rect x="618" y="101" width="5" height="5" fill="#00ff00"/><rect x="619" y="102" width="3" height="3" fill="#000"/><rect x="628" y="99" width="1" height="11" fill="#00ff00"/><rect x="626" y="100" width="5" height="5" fill="#00ff00"/><rect x="627" y="101" width="3" height="3" fill="#fff"/><rect x="636" y="87" width="1" height="22" fill="#00ff00"/><rect x="634" y="96" width="5" height="9" fill="#00ff00"/><rect x="635" y="97" width="3" height="7" fill="#000"/><rect x="644" y="92" width="1" height="7" fill="#00ff00"/><rect x="642" y="95" width="5" height="2" fill="#00ff00"/><rect x="652" y="89" width="1" height="7" fill="#00ff00"/><rect x="650" y="91" width="5" height="4" fill="#00ff00"/><rect x="651" y="92" width="3" height="2" fill="#000"/><rect x="660" y="53" width="1" height="41" fill="#00ff00"/><rect x="658" y="61" width="5" height="31" fill="#00ff00"/><rect x="659" y="62" width="3" height="29" fill="#000"/><rect x="668" y="56" width="1" height="22" fill="#00ff00"/><rect x="666" y="58" width="5" height="4" fill="#00ff00"/><rect x="667" y="59" width="3" height="2" fill="#000"/><rect x="676" y="52" width="1" height="26" fill="#00ff00"/><rect x="674" y="58" width="5" height="4" fill="#00ff00"/><rect x="675" y="59" width="3" height="2" fill="#fff"/><rect x="20" y="367" width="1" height="10" fill="#00ffff"/><rect x="18" y="371" width="5" height="2" fill="#00ffff"/><rect x="28" y="361" width="1" height="17" fill="#00ffff"/><rect x="26" y="369" width="5" height="4" fill="#00ffff"/><rect x="36" y="357" width="1" height="20" fill="#00ffff"/><rect x="34" y="366" width="5" height="5" fill="#00ffff"/><rect x="44" y="355" width="1" height="19" fill="#00ffff"/><rect x="42" y="363" width="5" height="6" fill="#00ffff"/><rect x="52" y="353" width="1" height="18" fill="#00ffff"/><rect x="50" y="361" width="5" height="6" fill="#00ffff"/><rect x="60" y="351" width="1" height="17" fill="#00ffff"/><rect x="58" y="358" width="5" height="6" fill="#00ffff"/><rect x="68" y="349" width="1" height="16" fill="#00ffff"/><rect x="66" y="356" width="5" height="6" fill="#00ffff"/><rect x="76" y="347" width="1" height="17" fill="#00ffff"/><rect x="74" y="354" width="5" height="5" fill="#00ffff"/><rect x="84" y="346" width="1" height="15" fill="#00ffff"/><rect x="82" y="353" width="5" height="4" fill="#00ffff"/><rect x="92" y="344" width="1" height="15" fill="#00ffff"/><rect x="90" y="351" width="5" height="5" fill="#00ffff"/><rect x="100" y="341" width="1" height="16" fill="#00ffff"/><rect x="98" y="349" width="5" height="5" fill="#00ffff"/><rect x="108" y="342" width="1" height="14" fill="#00ffff"/><rect x="106" y="345" width="5" height="7" fill="#00ffff"/><rect x="116" y="334" width="1" height="17" fill="#00ffff"/><rect x="114" y="342" width="5" height="7" fill="#00ffff"/><rect x="124" y="331" width="1" height="16" fill="#00ffff"/><rect x="122" y="338" width="5" height="8" fill="#00ffff"/><rect x="132" y="327" width="1" height="16" fill="#00ffff"/><rect x="130" y="335" width="5" height="7" fill="#00ffff"/><rect x="140" y="324" width="1" height="16" fill="#00ffff"/><rect x="138" y="331" width="5" height="8" fill="#00ffff"/><rect x="148" y="321" width="1" height="17" fill="#00ffff"/><rect x="146" y="328" width="5" height="8" fill="#00ffff"/><rect x="156" y="318" width="1" height="16" fill="#00ffff"/><rect x="154" y="325" width="5" height="8" fill="#00ffff"/><rect x="164" y="315" width="1" height="16" fill="#00ffff"/><rect x="162" y="322" width="5" height="8" fill="#00ffff"/><rect x="172" y="312" width="1" height="16" fill="#00ffff"/><rect x="170" y="319" width="5" height="8" fill="#00ffff"/><rect x="180" y="310" width="1" height="15" fill="#00ffff"/><rect x="178" y="317" width="5" height="6" fill="#00ffff"/><rect x="188" y="308" width="1" height="15" fill="#00ffff"/><rect x="186" y="315" width="5" height="6" fill="#00ffff"/><rect x="196" y="307" width="1" height="13" fill="#00ffff"/><rect x="194" y="313" width="5" height="5" fill="#00ffff"/><rect x="204" y="305" width="1" height="14" fill="#00ffff"/><rect x="202" y="311" width="5" height="5" fill="#00ffff"/><rect x="212" y="303" width="1" height="14" fill="#00ffff"/><rect x="210" y="309" width="5" height="5" fill="#00ffff"/><rect x="220" y="302" width="1" height="12" fill="#00ffff"/><rect x="218" y="308" width="5" height="4" fill="#00ffff"/><rect x="228" y="301" width="1" height="12" fill="#00ffff"/><rect x="226" y="307" width="5" height="3" fill="#00ffff"/><rect x="236" y="300" width="1" height="13" fill="#00ffff"/><rect x="234" y="306" width="5" height="3" fill="#00ffff"/><rect x="244" y="300" width="1" height="12" fill="#00ffff"/><rect x="242" y="305" width="5" height="3" fill="#00ffff"/><rect x="252" y="301" width="1" height="10" fill="#00ffff"/><rect x="250" y="305" width="5" height="2" fill="#00ffff"/><rect x="260" y="300" width="1" height="11" fill="#00ffff"/><rect x="258" y="304" width="5" height="2" fill="#00ffff"/><rect x="268" y="299" width="1" height="11" fill="#00ffff"/><rect x="266" y="304" width="5" height="2" fill="#00ffff"/><rect x="276" y="297" width="1" height="13" fill="#00ffff"/><rect x="274" y="303" width="5" height="3" fill="#00ffff"/><rect x="284" y="295" width="1" height="13" fill="#00ffff"/><rect x="282" y="301" width="5" height="3" fill="#00ffff"/><rect x="292" y="294" width="1" height="12" fill="#00ffff"/><rect x="290" y="300" width="5" height="3" fill="#00ffff"/><rect x="300" y="290" width="1" height="16" fill="#00ffff"/><rect x="298" y="298" width="5" height="4" fill="#00ffff"/><rect x="308" y="290" width="1" height="16" fill="#00ffff"/><rect x="306" y="297" width="5" height="4" fill="#00ffff"/><rect x="316" y="289" width="1" height="15" fill="#00ffff"/><rect x="314" y="296" width="5" height="4" fill="#00ffff"/><rect x="324" y="287" width="1" height="15" fill="#00ffff"/><rect x="322" y="295" width="5" height="3" fill="#00ffff"/><rect x="332" y="286" width="1" height="15" fill="#00ffff"/><rect x="330" y="293" width="5" height="4" fill="#00ffff"/><rect x="340" y="285" width="1" height="14" fill="#00ffff"/><rect x="338" y="292" width="5" height="3" fill="#00ffff"/><rect x="348" y="284" width="1" height="14" fill="#00ffff"/><rect x="346" y="291" width="5" height="3" fill="#00ffff"/><rect x="356" y="283" width="1" height="14" fill="#00ffff"/><rect x="354" y="289" width="5" height="4" fill="#00ffff"/><rect x="364" y="283" width="1" height="13" fill="#00ffff"/><rect x="362" y="289" width="5" height="3" fill="#00ffff"/><rect x="372" y="282" width="1" height="13" fill="#00ffff"/><rect x="370" y="288" width="5" height="3" fill="#00ffff"/><rect x="380" y="283" width="1" height="11" fill="#00ffff"/><rect x="378" y="287" width="5" height="3" fill="#00ffff"/><rect x="388" y="281" width="1" height="13" fill="#00ffff"/><rect x="386" y="286" width="5" height="3" fill="#00ffff"/><rect x="396" y="281" width="1" height="13" fill="#00ffff"/><rect x="394" y="286" width="5" height="2" fill="#00ffff"/><rect x="404" y="279" width="1" height="14" fill="#00ffff"/><rect x="402" y="286" width="5" height="3" fill="#00ffff"/><rect x="412" y="278" width="1" height="13" fill="#00ffff"/><rect x="410" y="285" width="5" height="3" fill="#00ffff"/><rect x="420" y="278" width="1" height="12" fill="#00ffff"/><rect x="418" y="284" width="5" height="3" fill="#00ffff"/><rect x="428" y="275" width="1" height="15" fill="#00ffff"/><rect x="426" y="282" width="5" height="4" fill="#00ffff"/><rect x="436" y="274" width="1" height="12" fill="#00ffff"/><rect x="434" y="279" width="5" height="5" fill="#00ffff"/><rect x="444" y="272" width="1" height="12" fill="#00ffff"/><rect x="442" y="277" width="5" height="5" fill="#00ffff"/><rect x="452" y="270" width="1" height="12" fill="#00ffff"/><rect x="450" y="275" width="5" height="5" fill="#00ffff"/><rect x="460" y="268" width="1" height="12" fill="#00ffff"/><rect x="458" y="273" width="5" height="5" fill="#00ffff"/><rect x="468" y="265" width="1" height="13" fill="#00ffff"/><rect x="466" y="270" width="5" height="6" fill="#00ffff"/><rect x="476" y="263" width="1" height="12" fill="#00ffff"/><rect x="474" y="268" width="5" height="6" fill="#00ffff"/><rect x="484" y="260" width="1" height="13" fill="#00ffff"/><rect x="482" y="265" width="5" height="6" fill="#00ffff"/><rect x="492" y="256" width="1" height="14" fill="#00ffff"/><rect x="490" y="262" width="5" height="7" fill="#00ffff"/><rect x="500" y="251" width="1" height="16" fill="#00ffff"/><rect x="498" y="258" width="5" height="8" fill="#00ffff"/><rect x="508" y="246" width="1" height="17" fill="#00ffff"/><rect x="506" y="253" width="5" height="9" fill="#00ffff"/><rect x="516" y="239" width="1" height="20" fill="#00ffff"/><rect x="514" y="247" width="5" height="11" fill="#00ffff"/><rect x="524" y="232" width="1" height="22" fill="#00ffff"/><rect x="522" y="240" width="5" height="14" fill="#00ffff"/><rect x="532" y="225" width="1" height="22" fill="#00ffff"/><rect x="530" y="233" width="5" height="14" fill="#00ffff"/><rect x="540" y="218" width="1" height="23" fill="#00ffff"/><rect x="538" y="227" width="5" height="14" fill="#00ffff"/><rect x="548" y="212" width="1" height="22" fill="#00ffff"/><rect x="546" y="220" width="5" height="14" fill="#00ffff"/><rect x="556" y="205" width="1" height="25" fill="#00ffff"/><rect x="554" y="214" width="5" height="14" fill="#00ffff"/><rect x="564" y="199" width="1" height="23" fill="#00ffff"/><rect x="562" y="208" width="5" height="14" fill="#00ffff"/><rect x="572" y="194" width="1" height="21" fill="#00ffff"/><rect x="570" y="203" width="5" height="12" fill="#00ffff"/><rect x="580" y="188" width="1" height="22" fill="#00ffff"/><rect x="578" y="198" width="5" height="12" fill="#00ffff"/><rect x="588" y="183" width="1" height="21" fill="#00ffff"/><rect x="586" y="192" width="5" height="12" fill="#00ffff"/><rect x="596" y="176" width="1" height="23" fill="#00ffff"/><rect x="594" y="186" width="5" height="13" fill="#00ffff"/><rect x="604" y="170" width="1" height="23" fill="#00ffff"/><rect x="602" y="180" width="5" height="13" fill="#00ffff"/><rect x="612" y="164" width="1" height="23" fill="#00ffff"/><rect x="610" y="174" width="5" height="13" fill="#00ffff"/><rect x="620" y="158" width="1" height="24" fill="#00ffff"/><rect x="618" y="169" width="5" height="13" fill="#00ffff"/><rect x="628" y="154" width="1" height="22" fill="#00ffff"/><rect x="626" y="164" width="5" height="12" fill="#00ffff"/><rect x="636" y="149" width="1" height="22" fill="#00ffff"/><rect x="634" y="158" width="5" height="13" fill="#00ffff"/><rect x="644" y="144" width="1" height="21" fill="#00ffff"/><rect x="642" y="153" width="5" height="12" fill="#00ffff"/><rect x="652" y="139" width="1" height="22" fill="#00ffff"/><rect x="650" y="149" width="5" height="12" fill="#00ffff"/><rect x="660" y="134" width="1" height="21" fill="#00ffff"/><rect x="658" y="143" width="5" height="12" fill="#00ffff"/><rect x="668" y="128" width="1" height="22" fill="#00ffff"/><rect x="666" y="138" width="5" height="12" fill="#00ffff"/><rect x="676" y="122" width="1" height="22" fill="#00ffff"/><rect x="674" y="132" width="5" height="12" fill="#00ffff"/><path d="M100 328.5 L110 338.5 L110 342.5 L100 332.5 L90 342.5 L90 338.5 Z" fill="#ff1493"/><rect x="99" y="329" width="3" height="22" fill="#ff1493"/><path d="M284 292.5 L294 302.5 L294 306.5 L284 296.5 L274 306.5 L274 302.5 Z" fill="#ff1493"/><rect x="283" y="293" width="3" height="21" fill="#ff1493"/><path d="M412 281.5 L422 291.5 L422 295.5 L412 285.5 L402 295.5 L402 291.5 Z" fill="#ff1493"/><rect x="411" y="282" width="3" height="21" fill="#ff1493"/><polygon points="92.20,343.20 94.00,347.38 98.52,346.85 95.80,350.50 98.52,354.15 94.00,353.62 92.20,357.80 90.40,353.62 85.88,354.15 88.60,350.50 85.88,346.85 90.40,347.38" fill="#ff1493" shape-rendering="geometricPrecision"/><polygon points="275.70,309.30 277.50,313.48 282.02,312.95 279.30,316.60 282.02,320.25 277.50,319.72 275.70,323.90 273.90,319.72 269.38,320.25 272.10,316.60 269.38,312.95 273.90,313.48" fill="#ff1493" shape-rendering="geometricPrecision"/><polygon points="403.70,293.60 405.50,297.78 410.02,297.25 407.30,300.90 410.02,304.55 405.50,304.02 403.70,308.20 401.90,304.02 397.38,304.55 400.10,300.90 397.38,297.25 401.90,297.78" fill="#ff1493" shape-rendering="geometricPrecision"/><rect x="12" y="372" width="1" height="3" fill="#ff0000"/><rect x="12" y="372" width="3" height="1" fill="#ff0000"/></g>
<g clip-path="url(#indclip)"><polyline points="12.5,446.5 20.5,468.0 28.5,450.2 36.5,455.5 44.5,456.8 52.5,453.7 60.5,446.0 68.5,463.0 76.5,481.0 84.5,518.5 92.5,489.2 100.5,479.0 108.5,468.0 116.5,468.0 124.5,479.1 132.5,473.4 140.5,463.0 148.5,449.9 156.5,464.5 164.5,486.0 172.5,497.6 180.5,515.8 188.5,515.7 196.5,507.6 204.5,507.6 212.5,511.0 220.5,544.6 228.5,529.6 236.5,530.4 244.5,530.7 252.5,528.0 260.5,530.7 268.5,519.9 276.5,513.0 284.5,503.8 292.5,491.9 300.5,507.6 308.5,496.0 316.5,485.7 324.5,487.6 332.5,487.9 340.5,496.0 348.5,506.8 356.5,516.7 364.5,513.7 372.5,504.0 380.5,521.9 388.5,534.7 396.5,526.0 404.5,519.0 412.5,504.0 420.5,484.7 428.5,485.9 436.5,481.6 444.5,483.9 452.5,471.4 460.5,461.8 468.5,467.0 476.5,467.0 484.5,462.0 492.5,461.8 500.5,435.6 508.5,419.4 516.5,391.7 524.5,394.5 532.5,395.6 540.5,414.8 548.5,396.8 556.5,408.8 564.5,430.2 572.5,468.8 580.5,461.9 588.5,462.8 596.5,449.1 604.5,483.2 612.5,447.0 620.5,465.9 628.5,474.8 636.5,465.2 644.5,449.0 652.5,469.3 660.5,454.9 668.5,466.6 676.5,441.9" fill="none" stroke="#1e90ff" stroke-width="2" stroke-linejoin="round" shape-rendering="crispEdges"/></g>
<path d="M12 547L12 553L17 553Z" fill="#8899aa"/>
<path d="M15 42H22L18.5 45.5Z" fill="#fff" shape-rendering="geometricPrecision"/>
</svg>
<div class="t" style="left:683px;top:43px;letter-spacing:0.5px;transform:scale(0.8400000000000001,1.0)">129.460</div>
<div class="t" style="left:683px;top:76px;letter-spacing:0.5px;transform:scale(0.8400000000000001,1.0)">129.050</div>
<div class="t" style="left:683px;top:109px;letter-spacing:0.5px;transform:scale(0.8400000000000001,1.0)">128.650</div>
<div class="t" style="left:683px;top:142px;letter-spacing:0.5px;transform:scale(0.8400000000000001,1.0)">128.240</div>
<div class="t" style="left:683px;top:175px;letter-spacing:0.5px;transform:scale(0.8400000000000001,1.0)">127.830</div>
<div class="t" style="left:683px;top:208px;letter-spacing:0.5px;transform:scale(0.8400000000000001,1.0)">127.420</div>
<div class="t" style="left:683px;top:241px;letter-spacing:0.5px;transform:scale(0.8400000000000001,1.0)">127.020</div>
<div class="t" style="left:683px;top:274px;letter-spacing:0.5px;transform:scale(0.8400000000000001,1.0)">126.610</div>
<div class="t" style="left:683px;top:307px;letter-spacing:0.5px;transform:scale(0.8400000000000001,1.0)">126.200</div>
<div class="t" style="left:683px;top:340px;letter-spacing:0.5px;transform:scale(0.8400000000000001,1.0)">125.800</div>
<div class="t" style="left:683px;top:373px;letter-spacing:0.5px;transform:scale(0.8400000000000001,1.0)">125.390</div>
<div class="t" style="left:681px;top:385px;letter-spacing:0.5px;transform:scale(0.8400000000000001,1.0)">101.0048</div>
<div class="t" style="left:680px;top:515px;letter-spacing:0.5px;transform:scale(0.8400000000000001,1.0)">100</div>
<div class="t" style="left:681px;top:542px;letter-spacing:0.5px;transform:scale(0.8400000000000001,1.0)">99.7485</div>
<div class="t" style="left:11px;top:558px;letter-spacing:0.5px;transform:scale(0.88,1.0)">14 Apr 2022</div>
<div class="t" style="left:75px;top:558px;letter-spacing:0.5px;transform:scale(0.88,1.0)">15 Apr 00:00</div>
<div class="t" style="left:139px;top:558px;letter-spacing:0.5px;transform:scale(0.88,1.0)">15 Apr 08:00</div>
<div class="t" style="left:203px;top:558px;letter-spacing:0.5px;transform:scale(0.88,1.0)">15 Apr 16:00</div>
<div class="t" style="left:267px;top:558px;letter-spacing:0.5px;transform:scale(0.88,1.0)">18 Apr 00:00</div>
<div class="t" style="left:331px;top:558px;letter-spacing:0.5px;transform:scale(0.88,1.0)">18 Apr 08:00</div>
<div class="t" style="left:395px;top:558px;letter-spacing:0.5px;transform:scale(0.88,1.0)">18 Apr 16:00</div>
<div class="t" style="left:459px;top:558px;letter-spacing:0.5px;transform:scale(0.88,1.0)">19 Apr 00:00</div>
<div class="t" style="left:523px;top:558px;letter-spacing:0.5px;transform:scale(0.88,1.0)">19 Apr 08:00</div>
<div class="t" style="left:587px;top:558px;letter-spacing:0.5px;transform:scale(0.88,1.0)">19 Apr 16:00</div>
<div class="t" style="left:651px;top:558px;letter-spacing:0.5px;transform:scale(0.88,1.0)">20 Apr 00:00</div>
<div class="t" style="left:27px;top:39px;letter-spacing:0.5px;transform:scale(0.89,1.0)">USDJPY,H1</div>
<div class="t" style="left:84px;top:39px;letter-spacing:0.5px;transform:scale(0.8400000000000001,1.0)">144.226</div>
<div class="t" style="left:121px;top:39px;letter-spacing:0.5px;transform:scale(0.8400000000000001,1.0)">144.469</div>
<div class="t" style="left:156px;top:39px;letter-spacing:0.5px;transform:scale(0.8400000000000001,1.0)">144.216</div>
<div class="t" style="left:192px;top:39px;letter-spacing:0.5px;transform:scale(0.8400000000000001,1.0)">144.465</div>
<div class="t" style="left:16px;top:388px;letter-spacing:0.5px;transform:scale(0.8450000000000001,1.0)">Momentum(9) 100.2234</div>
<div class="tt" style="left:29px;top:13px">USDJPY,H1</div>
</div>
</body></html>
